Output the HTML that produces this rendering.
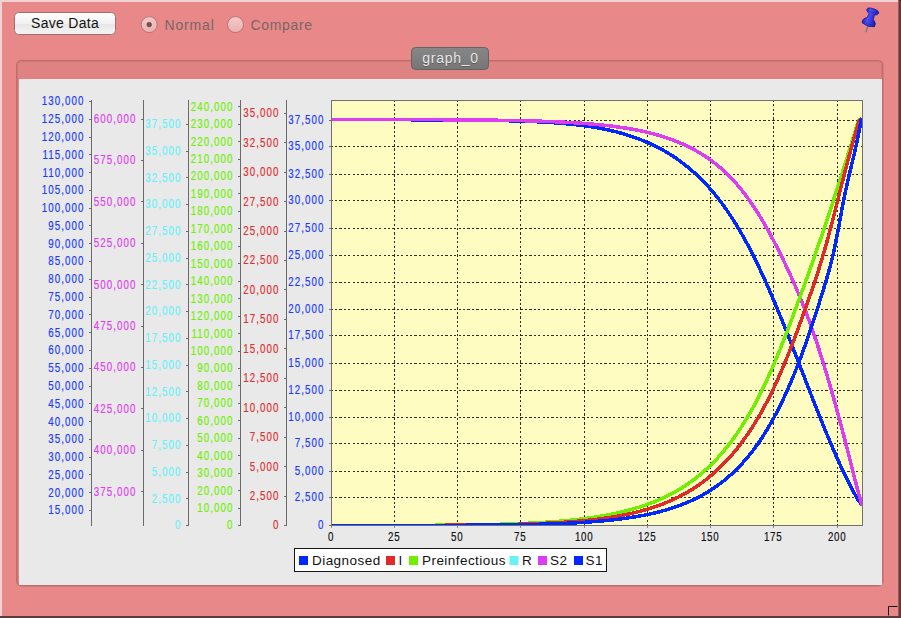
<!DOCTYPE html>
<html><head><meta charset="utf-8">
<style>
html,body{margin:0;padding:0;}
body{width:901px;height:618px;overflow:hidden;background:#e98888;position:relative;font-family:"Liberation Sans", sans-serif;}
svg{position:absolute;left:0;top:0;}
.al{font-family:"Liberation Sans", sans-serif;font-size:12.5px;letter-spacing:1.4px;text-anchor:end;stroke-width:0.2px;}
.xl{font-family:"Liberation Sans", sans-serif;font-size:12.5px;letter-spacing:1.0px;text-anchor:middle;stroke-width:0.2px;}
.lg{font-family:"Liberation Sans", sans-serif;font-size:13.5px;letter-spacing:0.45px;}
</style></head><body>
<svg width="901" height="618" viewBox="0 0 901 618">
<defs>
<clipPath id="clip"><rect x="331.5" y="100.5" width="531" height="425"/></clipPath>
<linearGradient id="btn" x1="0" y1="0" x2="0" y2="1">
<stop offset="0" stop-color="#ffffff"/><stop offset="0.5" stop-color="#f1f1f1"/><stop offset="0.55" stop-color="#e6e6e6"/><stop offset="1" stop-color="#f6f6f6"/>
</linearGradient>
<linearGradient id="radio" x1="0" y1="0" x2="0" y2="1">
<stop offset="0" stop-color="#f4caca"/><stop offset="1" stop-color="#eab0b0"/>
</linearGradient>
<linearGradient id="tab" x1="0" y1="0" x2="0" y2="1">
<stop offset="0" stop-color="#878787"/><stop offset="1" stop-color="#767676"/>
</linearGradient>
<linearGradient id="pin" x1="0" y1="0" x2="1" y2="0">
<stop offset="0" stop-color="#2020b8"/><stop offset="0.3" stop-color="#5050f4"/><stop offset="0.6" stop-color="#3838e0"/><stop offset="1" stop-color="#18189c"/>
</linearGradient>
</defs>
<!-- window frame -->
<rect x="0" y="0" width="901" height="2" fill="#f2d3d3"/>
<rect x="0" y="0" width="2" height="618" fill="#f2d3d3"/>
<rect x="898" y="0" width="1" height="618" fill="#9a5c5c"/>
<rect x="899" y="0" width="2" height="618" fill="#5a3c3c"/>
<rect x="900" y="0" width="1" height="1" fill="#700808"/>
<rect x="0" y="616" width="901" height="2" fill="#5a3c3c"/>
<path d="M888.5 615.5 V606.5 H897.5" fill="none" stroke="#111" stroke-width="1"/>
<!-- toolbar -->
<rect x="14.5" y="12.5" width="101" height="22" rx="4" fill="url(#btn)" stroke="#a86a6a" stroke-width="1"/>
<text x="31" y="28" font-size="14" fill="#111" letter-spacing="0.3">Save Data</text>
<circle cx="149.2" cy="24.6" r="8" fill="url(#radio)" stroke="#b86c6c" stroke-width="0.9"/>
<circle cx="149.2" cy="24.6" r="2.6" fill="#7a4c4e"/>
<text x="164.5" y="30" font-size="14" fill="#786666" letter-spacing="0.85">Normal</text>
<circle cx="235.5" cy="24.6" r="8" fill="url(#radio)" stroke="#b86c6c" stroke-width="0.9"/>
<text x="250.5" y="30" font-size="14" fill="#786666" letter-spacing="0.65">Compare</text>
<!-- pin -->
<g transform="translate(865.7,32.8) rotate(18)">
<line x1="0" y1="-0.5" x2="0" y2="-8" stroke="#7c7c7c" stroke-width="1.5"/>
<path d="M-6.5,-8.5 Q-8,-12.5 -3.2,-15 L-2.8,-19.5 Q-6.2,-20.5 -6.2,-22.5 Q-6.2,-25.3 0,-25.3 Q6.2,-25.3 6.2,-22.5 Q6.2,-20.5 2.8,-19.5 L3.2,-15 Q7.5,-12.5 6.5,-8.5 Q0,-5.5 -6.5,-8.5 Z" fill="url(#pin)" stroke="#16168c" stroke-width="0.7"/>
<path d="M-5.8,-22.3 Q0,-20 5.8,-22.3" fill="none" stroke="#2828b8" stroke-width="0.6"/>
<path d="M-6,-10 Q0,-7.5 6,-10" fill="none" stroke="#2626b0" stroke-width="0.6"/>
</g>
<!-- tabbed panel -->
<rect x="16.5" y="60.5" width="867" height="526" rx="5" fill="none" stroke="#d47b7b" stroke-width="1"/>
<rect x="16.5" y="60.5" width="866" height="525" rx="4.5" fill="#de8282" stroke="#bf6c6c" stroke-width="1"/>
<rect x="17.5" y="61.5" width="864" height="523" rx="3.5" fill="none" stroke="#d07777" stroke-width="1"/>
<rect x="19" y="79" width="863" height="506" fill="#e9e9e9"/>
<rect x="411.5" y="47.5" width="77" height="22" rx="4" fill="url(#tab)" stroke="#636363" stroke-width="1"/>
<text x="450.5" y="64" font-size="14" fill="#5a5a5a" text-anchor="middle" letter-spacing="0.7">graph_0</text>
<text x="450.5" y="63" font-size="14" fill="#e6e6e6" text-anchor="middle" letter-spacing="0.7">graph_0</text>
<line x1="91.5" y1="100" x2="91.5" y2="526" stroke="#6a6a6a" stroke-width="1"/>
<line x1="89.0" y1="510.5" x2="91.5" y2="510.5" stroke="#6a6a6a" stroke-width="1"/>
<text x="108.45" y="514.5" fill="#1a3cff" stroke="#1a3cff" class="al" transform="scale(0.78 1)">15,000</text>
<line x1="89.0" y1="492.5" x2="91.5" y2="492.5" stroke="#6a6a6a" stroke-width="1"/>
<text x="108.45" y="496.7" fill="#1a3cff" stroke="#1a3cff" class="al" transform="scale(0.78 1)">20,000</text>
<line x1="89.0" y1="474.5" x2="91.5" y2="474.5" stroke="#6a6a6a" stroke-width="1"/>
<text x="108.45" y="478.9" fill="#1a3cff" stroke="#1a3cff" class="al" transform="scale(0.78 1)">25,000</text>
<line x1="89.0" y1="457.5" x2="91.5" y2="457.5" stroke="#6a6a6a" stroke-width="1"/>
<text x="108.45" y="461.2" fill="#1a3cff" stroke="#1a3cff" class="al" transform="scale(0.78 1)">30,000</text>
<line x1="89.0" y1="439.5" x2="91.5" y2="439.5" stroke="#6a6a6a" stroke-width="1"/>
<text x="108.45" y="443.4" fill="#1a3cff" stroke="#1a3cff" class="al" transform="scale(0.78 1)">35,000</text>
<line x1="89.0" y1="421.5" x2="91.5" y2="421.5" stroke="#6a6a6a" stroke-width="1"/>
<text x="108.45" y="425.6" fill="#1a3cff" stroke="#1a3cff" class="al" transform="scale(0.78 1)">40,000</text>
<line x1="89.0" y1="403.5" x2="91.5" y2="403.5" stroke="#6a6a6a" stroke-width="1"/>
<text x="108.45" y="407.8" fill="#1a3cff" stroke="#1a3cff" class="al" transform="scale(0.78 1)">45,000</text>
<line x1="89.0" y1="386.5" x2="91.5" y2="386.5" stroke="#6a6a6a" stroke-width="1"/>
<text x="108.45" y="390.0" fill="#1a3cff" stroke="#1a3cff" class="al" transform="scale(0.78 1)">50,000</text>
<line x1="89.0" y1="368.5" x2="91.5" y2="368.5" stroke="#6a6a6a" stroke-width="1"/>
<text x="108.45" y="372.2" fill="#1a3cff" stroke="#1a3cff" class="al" transform="scale(0.78 1)">55,000</text>
<line x1="89.0" y1="350.5" x2="91.5" y2="350.5" stroke="#6a6a6a" stroke-width="1"/>
<text x="108.45" y="354.5" fill="#1a3cff" stroke="#1a3cff" class="al" transform="scale(0.78 1)">60,000</text>
<line x1="89.0" y1="332.5" x2="91.5" y2="332.5" stroke="#6a6a6a" stroke-width="1"/>
<text x="108.45" y="336.7" fill="#1a3cff" stroke="#1a3cff" class="al" transform="scale(0.78 1)">65,000</text>
<line x1="89.0" y1="314.5" x2="91.5" y2="314.5" stroke="#6a6a6a" stroke-width="1"/>
<text x="108.45" y="318.9" fill="#1a3cff" stroke="#1a3cff" class="al" transform="scale(0.78 1)">70,000</text>
<line x1="89.0" y1="297.5" x2="91.5" y2="297.5" stroke="#6a6a6a" stroke-width="1"/>
<text x="108.45" y="301.1" fill="#1a3cff" stroke="#1a3cff" class="al" transform="scale(0.78 1)">75,000</text>
<line x1="89.0" y1="279.5" x2="91.5" y2="279.5" stroke="#6a6a6a" stroke-width="1"/>
<text x="108.45" y="283.3" fill="#1a3cff" stroke="#1a3cff" class="al" transform="scale(0.78 1)">80,000</text>
<line x1="89.0" y1="261.5" x2="91.5" y2="261.5" stroke="#6a6a6a" stroke-width="1"/>
<text x="108.45" y="265.5" fill="#1a3cff" stroke="#1a3cff" class="al" transform="scale(0.78 1)">85,000</text>
<line x1="89.0" y1="243.5" x2="91.5" y2="243.5" stroke="#6a6a6a" stroke-width="1"/>
<text x="108.45" y="247.8" fill="#1a3cff" stroke="#1a3cff" class="al" transform="scale(0.78 1)">90,000</text>
<line x1="89.0" y1="225.5" x2="91.5" y2="225.5" stroke="#6a6a6a" stroke-width="1"/>
<text x="108.45" y="230.0" fill="#1a3cff" stroke="#1a3cff" class="al" transform="scale(0.78 1)">95,000</text>
<line x1="89.0" y1="208.5" x2="91.5" y2="208.5" stroke="#6a6a6a" stroke-width="1"/>
<text x="108.45" y="212.2" fill="#1a3cff" stroke="#1a3cff" class="al" transform="scale(0.78 1)">100,000</text>
<line x1="89.0" y1="190.5" x2="91.5" y2="190.5" stroke="#6a6a6a" stroke-width="1"/>
<text x="108.45" y="194.4" fill="#1a3cff" stroke="#1a3cff" class="al" transform="scale(0.78 1)">105,000</text>
<line x1="89.0" y1="172.5" x2="91.5" y2="172.5" stroke="#6a6a6a" stroke-width="1"/>
<text x="108.45" y="176.6" fill="#1a3cff" stroke="#1a3cff" class="al" transform="scale(0.78 1)">110,000</text>
<line x1="89.0" y1="154.5" x2="91.5" y2="154.5" stroke="#6a6a6a" stroke-width="1"/>
<text x="108.45" y="158.8" fill="#1a3cff" stroke="#1a3cff" class="al" transform="scale(0.78 1)">115,000</text>
<line x1="89.0" y1="137.5" x2="91.5" y2="137.5" stroke="#6a6a6a" stroke-width="1"/>
<text x="108.45" y="141.1" fill="#1a3cff" stroke="#1a3cff" class="al" transform="scale(0.78 1)">120,000</text>
<line x1="89.0" y1="119.5" x2="91.5" y2="119.5" stroke="#6a6a6a" stroke-width="1"/>
<text x="108.45" y="123.3" fill="#1a3cff" stroke="#1a3cff" class="al" transform="scale(0.78 1)">125,000</text>
<line x1="89.0" y1="101.5" x2="91.5" y2="101.5" stroke="#6a6a6a" stroke-width="1"/>
<text x="108.45" y="105.5" fill="#1a3cff" stroke="#1a3cff" class="al" transform="scale(0.78 1)">130,000</text>
<line x1="143.5" y1="100" x2="143.5" y2="526" stroke="#6a6a6a" stroke-width="1"/>
<line x1="141.0" y1="491.5" x2="143.5" y2="491.5" stroke="#6a6a6a" stroke-width="1"/>
<text x="175.12" y="495.8" fill="#e040f0" stroke="#e040f0" class="al" transform="scale(0.78 1)">375,000</text>
<line x1="141.0" y1="450.5" x2="143.5" y2="450.5" stroke="#6a6a6a" stroke-width="1"/>
<text x="175.12" y="454.4" fill="#e040f0" stroke="#e040f0" class="al" transform="scale(0.78 1)">400,000</text>
<line x1="141.0" y1="408.5" x2="143.5" y2="408.5" stroke="#6a6a6a" stroke-width="1"/>
<text x="175.12" y="413.0" fill="#e040f0" stroke="#e040f0" class="al" transform="scale(0.78 1)">425,000</text>
<line x1="141.0" y1="367.5" x2="143.5" y2="367.5" stroke="#6a6a6a" stroke-width="1"/>
<text x="175.12" y="371.5" fill="#e040f0" stroke="#e040f0" class="al" transform="scale(0.78 1)">450,000</text>
<line x1="141.0" y1="326.5" x2="143.5" y2="326.5" stroke="#6a6a6a" stroke-width="1"/>
<text x="175.12" y="330.1" fill="#e040f0" stroke="#e040f0" class="al" transform="scale(0.78 1)">475,000</text>
<line x1="141.0" y1="284.5" x2="143.5" y2="284.5" stroke="#6a6a6a" stroke-width="1"/>
<text x="175.12" y="288.7" fill="#e040f0" stroke="#e040f0" class="al" transform="scale(0.78 1)">500,000</text>
<line x1="141.0" y1="243.5" x2="143.5" y2="243.5" stroke="#6a6a6a" stroke-width="1"/>
<text x="175.12" y="247.3" fill="#e040f0" stroke="#e040f0" class="al" transform="scale(0.78 1)">525,000</text>
<line x1="141.0" y1="201.5" x2="143.5" y2="201.5" stroke="#6a6a6a" stroke-width="1"/>
<text x="175.12" y="205.8" fill="#e040f0" stroke="#e040f0" class="al" transform="scale(0.78 1)">550,000</text>
<line x1="141.0" y1="160.5" x2="143.5" y2="160.5" stroke="#6a6a6a" stroke-width="1"/>
<text x="175.12" y="164.4" fill="#e040f0" stroke="#e040f0" class="al" transform="scale(0.78 1)">575,000</text>
<line x1="141.0" y1="119.5" x2="143.5" y2="119.5" stroke="#6a6a6a" stroke-width="1"/>
<text x="175.12" y="123.0" fill="#e040f0" stroke="#e040f0" class="al" transform="scale(0.78 1)">600,000</text>
<line x1="188.5" y1="100" x2="188.5" y2="526" stroke="#6a6a6a" stroke-width="1"/>
<line x1="186.0" y1="525.5" x2="188.5" y2="525.5" stroke="#6a6a6a" stroke-width="1"/>
<text x="232.81" y="529.5" fill="#66f2f8" stroke="#66f2f8" class="al" transform="scale(0.78 1)">0</text>
<line x1="186.0" y1="498.5" x2="188.5" y2="498.5" stroke="#6a6a6a" stroke-width="1"/>
<text x="232.81" y="502.8" fill="#66f2f8" stroke="#66f2f8" class="al" transform="scale(0.78 1)">2,500</text>
<line x1="186.0" y1="472.5" x2="188.5" y2="472.5" stroke="#6a6a6a" stroke-width="1"/>
<text x="232.81" y="476.0" fill="#66f2f8" stroke="#66f2f8" class="al" transform="scale(0.78 1)">5,000</text>
<line x1="186.0" y1="445.5" x2="188.5" y2="445.5" stroke="#6a6a6a" stroke-width="1"/>
<text x="232.81" y="449.3" fill="#66f2f8" stroke="#66f2f8" class="al" transform="scale(0.78 1)">7,500</text>
<line x1="186.0" y1="418.5" x2="188.5" y2="418.5" stroke="#6a6a6a" stroke-width="1"/>
<text x="232.81" y="422.5" fill="#66f2f8" stroke="#66f2f8" class="al" transform="scale(0.78 1)">10,000</text>
<line x1="186.0" y1="391.5" x2="188.5" y2="391.5" stroke="#6a6a6a" stroke-width="1"/>
<text x="232.81" y="395.8" fill="#66f2f8" stroke="#66f2f8" class="al" transform="scale(0.78 1)">12,500</text>
<line x1="186.0" y1="365.5" x2="188.5" y2="365.5" stroke="#6a6a6a" stroke-width="1"/>
<text x="232.81" y="369.0" fill="#66f2f8" stroke="#66f2f8" class="al" transform="scale(0.78 1)">15,000</text>
<line x1="186.0" y1="338.5" x2="188.5" y2="338.5" stroke="#6a6a6a" stroke-width="1"/>
<text x="232.81" y="342.3" fill="#66f2f8" stroke="#66f2f8" class="al" transform="scale(0.78 1)">17,500</text>
<line x1="186.0" y1="311.5" x2="188.5" y2="311.5" stroke="#6a6a6a" stroke-width="1"/>
<text x="232.81" y="315.5" fill="#66f2f8" stroke="#66f2f8" class="al" transform="scale(0.78 1)">20,000</text>
<line x1="186.0" y1="284.5" x2="188.5" y2="284.5" stroke="#6a6a6a" stroke-width="1"/>
<text x="232.81" y="288.8" fill="#66f2f8" stroke="#66f2f8" class="al" transform="scale(0.78 1)">22,500</text>
<line x1="186.0" y1="258.5" x2="188.5" y2="258.5" stroke="#6a6a6a" stroke-width="1"/>
<text x="232.81" y="262.0" fill="#66f2f8" stroke="#66f2f8" class="al" transform="scale(0.78 1)">25,000</text>
<line x1="186.0" y1="231.5" x2="188.5" y2="231.5" stroke="#6a6a6a" stroke-width="1"/>
<text x="232.81" y="235.3" fill="#66f2f8" stroke="#66f2f8" class="al" transform="scale(0.78 1)">27,500</text>
<line x1="186.0" y1="204.5" x2="188.5" y2="204.5" stroke="#6a6a6a" stroke-width="1"/>
<text x="232.81" y="208.5" fill="#66f2f8" stroke="#66f2f8" class="al" transform="scale(0.78 1)">30,000</text>
<line x1="186.0" y1="177.5" x2="188.5" y2="177.5" stroke="#6a6a6a" stroke-width="1"/>
<text x="232.81" y="181.8" fill="#66f2f8" stroke="#66f2f8" class="al" transform="scale(0.78 1)">32,500</text>
<line x1="186.0" y1="151.5" x2="188.5" y2="151.5" stroke="#6a6a6a" stroke-width="1"/>
<text x="232.81" y="155.0" fill="#66f2f8" stroke="#66f2f8" class="al" transform="scale(0.78 1)">35,000</text>
<line x1="186.0" y1="124.5" x2="188.5" y2="124.5" stroke="#6a6a6a" stroke-width="1"/>
<text x="232.81" y="128.3" fill="#66f2f8" stroke="#66f2f8" class="al" transform="scale(0.78 1)">37,500</text>
<line x1="240.5" y1="100" x2="240.5" y2="526" stroke="#6a6a6a" stroke-width="1"/>
<line x1="238.0" y1="525.5" x2="240.5" y2="525.5" stroke="#6a6a6a" stroke-width="1"/>
<text x="299.48" y="529.5" fill="#6ef000" stroke="#6ef000" class="al" transform="scale(0.78 1)">0</text>
<line x1="238.0" y1="508.5" x2="240.5" y2="508.5" stroke="#6a6a6a" stroke-width="1"/>
<text x="299.48" y="512.0" fill="#6ef000" stroke="#6ef000" class="al" transform="scale(0.78 1)">10,000</text>
<line x1="238.0" y1="490.5" x2="240.5" y2="490.5" stroke="#6a6a6a" stroke-width="1"/>
<text x="299.48" y="494.6" fill="#6ef000" stroke="#6ef000" class="al" transform="scale(0.78 1)">20,000</text>
<line x1="238.0" y1="473.5" x2="240.5" y2="473.5" stroke="#6a6a6a" stroke-width="1"/>
<text x="299.48" y="477.1" fill="#6ef000" stroke="#6ef000" class="al" transform="scale(0.78 1)">30,000</text>
<line x1="238.0" y1="455.5" x2="240.5" y2="455.5" stroke="#6a6a6a" stroke-width="1"/>
<text x="299.48" y="459.7" fill="#6ef000" stroke="#6ef000" class="al" transform="scale(0.78 1)">40,000</text>
<line x1="238.0" y1="438.5" x2="240.5" y2="438.5" stroke="#6a6a6a" stroke-width="1"/>
<text x="299.48" y="442.2" fill="#6ef000" stroke="#6ef000" class="al" transform="scale(0.78 1)">50,000</text>
<line x1="238.0" y1="420.5" x2="240.5" y2="420.5" stroke="#6a6a6a" stroke-width="1"/>
<text x="299.48" y="424.8" fill="#6ef000" stroke="#6ef000" class="al" transform="scale(0.78 1)">60,000</text>
<line x1="238.0" y1="403.5" x2="240.5" y2="403.5" stroke="#6a6a6a" stroke-width="1"/>
<text x="299.48" y="407.3" fill="#6ef000" stroke="#6ef000" class="al" transform="scale(0.78 1)">70,000</text>
<line x1="238.0" y1="385.5" x2="240.5" y2="385.5" stroke="#6a6a6a" stroke-width="1"/>
<text x="299.48" y="389.9" fill="#6ef000" stroke="#6ef000" class="al" transform="scale(0.78 1)">80,000</text>
<line x1="238.0" y1="368.5" x2="240.5" y2="368.5" stroke="#6a6a6a" stroke-width="1"/>
<text x="299.48" y="372.4" fill="#6ef000" stroke="#6ef000" class="al" transform="scale(0.78 1)">90,000</text>
<line x1="238.0" y1="351.5" x2="240.5" y2="351.5" stroke="#6a6a6a" stroke-width="1"/>
<text x="299.48" y="355.0" fill="#6ef000" stroke="#6ef000" class="al" transform="scale(0.78 1)">100,000</text>
<line x1="238.0" y1="333.5" x2="240.5" y2="333.5" stroke="#6a6a6a" stroke-width="1"/>
<text x="299.48" y="337.6" fill="#6ef000" stroke="#6ef000" class="al" transform="scale(0.78 1)">110,000</text>
<line x1="238.0" y1="316.5" x2="240.5" y2="316.5" stroke="#6a6a6a" stroke-width="1"/>
<text x="299.48" y="320.1" fill="#6ef000" stroke="#6ef000" class="al" transform="scale(0.78 1)">120,000</text>
<line x1="238.0" y1="298.5" x2="240.5" y2="298.5" stroke="#6a6a6a" stroke-width="1"/>
<text x="299.48" y="302.6" fill="#6ef000" stroke="#6ef000" class="al" transform="scale(0.78 1)">130,000</text>
<line x1="238.0" y1="281.5" x2="240.5" y2="281.5" stroke="#6a6a6a" stroke-width="1"/>
<text x="299.48" y="285.2" fill="#6ef000" stroke="#6ef000" class="al" transform="scale(0.78 1)">140,000</text>
<line x1="238.0" y1="263.5" x2="240.5" y2="263.5" stroke="#6a6a6a" stroke-width="1"/>
<text x="299.48" y="267.8" fill="#6ef000" stroke="#6ef000" class="al" transform="scale(0.78 1)">150,000</text>
<line x1="238.0" y1="246.5" x2="240.5" y2="246.5" stroke="#6a6a6a" stroke-width="1"/>
<text x="299.48" y="250.3" fill="#6ef000" stroke="#6ef000" class="al" transform="scale(0.78 1)">160,000</text>
<line x1="238.0" y1="228.5" x2="240.5" y2="228.5" stroke="#6a6a6a" stroke-width="1"/>
<text x="299.48" y="232.9" fill="#6ef000" stroke="#6ef000" class="al" transform="scale(0.78 1)">170,000</text>
<line x1="238.0" y1="211.5" x2="240.5" y2="211.5" stroke="#6a6a6a" stroke-width="1"/>
<text x="299.48" y="215.4" fill="#6ef000" stroke="#6ef000" class="al" transform="scale(0.78 1)">180,000</text>
<line x1="238.0" y1="193.5" x2="240.5" y2="193.5" stroke="#6a6a6a" stroke-width="1"/>
<text x="299.48" y="197.9" fill="#6ef000" stroke="#6ef000" class="al" transform="scale(0.78 1)">190,000</text>
<line x1="238.0" y1="176.5" x2="240.5" y2="176.5" stroke="#6a6a6a" stroke-width="1"/>
<text x="299.48" y="180.5" fill="#6ef000" stroke="#6ef000" class="al" transform="scale(0.78 1)">200,000</text>
<line x1="238.0" y1="159.5" x2="240.5" y2="159.5" stroke="#6a6a6a" stroke-width="1"/>
<text x="299.48" y="163.1" fill="#6ef000" stroke="#6ef000" class="al" transform="scale(0.78 1)">210,000</text>
<line x1="238.0" y1="141.5" x2="240.5" y2="141.5" stroke="#6a6a6a" stroke-width="1"/>
<text x="299.48" y="145.6" fill="#6ef000" stroke="#6ef000" class="al" transform="scale(0.78 1)">220,000</text>
<line x1="238.0" y1="124.5" x2="240.5" y2="124.5" stroke="#6a6a6a" stroke-width="1"/>
<text x="299.48" y="128.2" fill="#6ef000" stroke="#6ef000" class="al" transform="scale(0.78 1)">230,000</text>
<line x1="238.0" y1="106.5" x2="240.5" y2="106.5" stroke="#6a6a6a" stroke-width="1"/>
<text x="299.48" y="110.7" fill="#6ef000" stroke="#6ef000" class="al" transform="scale(0.78 1)">240,000</text>
<line x1="286.5" y1="100" x2="286.5" y2="526" stroke="#6a6a6a" stroke-width="1"/>
<line x1="284.0" y1="525.5" x2="286.5" y2="525.5" stroke="#6a6a6a" stroke-width="1"/>
<text x="358.45" y="529.5" fill="#e03030" stroke="#e03030" class="al" transform="scale(0.78 1)">0</text>
<line x1="284.0" y1="496.5" x2="286.5" y2="496.5" stroke="#6a6a6a" stroke-width="1"/>
<text x="358.45" y="500.1" fill="#e03030" stroke="#e03030" class="al" transform="scale(0.78 1)">2,500</text>
<line x1="284.0" y1="466.5" x2="286.5" y2="466.5" stroke="#6a6a6a" stroke-width="1"/>
<text x="358.45" y="470.6" fill="#e03030" stroke="#e03030" class="al" transform="scale(0.78 1)">5,000</text>
<line x1="284.0" y1="437.5" x2="286.5" y2="437.5" stroke="#6a6a6a" stroke-width="1"/>
<text x="358.45" y="441.2" fill="#e03030" stroke="#e03030" class="al" transform="scale(0.78 1)">7,500</text>
<line x1="284.0" y1="407.5" x2="286.5" y2="407.5" stroke="#6a6a6a" stroke-width="1"/>
<text x="358.45" y="411.7" fill="#e03030" stroke="#e03030" class="al" transform="scale(0.78 1)">10,000</text>
<line x1="284.0" y1="378.5" x2="286.5" y2="378.5" stroke="#6a6a6a" stroke-width="1"/>
<text x="358.45" y="382.3" fill="#e03030" stroke="#e03030" class="al" transform="scale(0.78 1)">12,500</text>
<line x1="284.0" y1="348.5" x2="286.5" y2="348.5" stroke="#6a6a6a" stroke-width="1"/>
<text x="358.45" y="352.8" fill="#e03030" stroke="#e03030" class="al" transform="scale(0.78 1)">15,000</text>
<line x1="284.0" y1="319.5" x2="286.5" y2="319.5" stroke="#6a6a6a" stroke-width="1"/>
<text x="358.45" y="323.4" fill="#e03030" stroke="#e03030" class="al" transform="scale(0.78 1)">17,500</text>
<line x1="284.0" y1="289.5" x2="286.5" y2="289.5" stroke="#6a6a6a" stroke-width="1"/>
<text x="358.45" y="294.0" fill="#e03030" stroke="#e03030" class="al" transform="scale(0.78 1)">20,000</text>
<line x1="284.0" y1="260.5" x2="286.5" y2="260.5" stroke="#6a6a6a" stroke-width="1"/>
<text x="358.45" y="264.5" fill="#e03030" stroke="#e03030" class="al" transform="scale(0.78 1)">22,500</text>
<line x1="284.0" y1="231.5" x2="286.5" y2="231.5" stroke="#6a6a6a" stroke-width="1"/>
<text x="358.45" y="235.1" fill="#e03030" stroke="#e03030" class="al" transform="scale(0.78 1)">25,000</text>
<line x1="284.0" y1="201.5" x2="286.5" y2="201.5" stroke="#6a6a6a" stroke-width="1"/>
<text x="358.45" y="205.6" fill="#e03030" stroke="#e03030" class="al" transform="scale(0.78 1)">27,500</text>
<line x1="284.0" y1="172.5" x2="286.5" y2="172.5" stroke="#6a6a6a" stroke-width="1"/>
<text x="358.45" y="176.2" fill="#e03030" stroke="#e03030" class="al" transform="scale(0.78 1)">30,000</text>
<line x1="284.0" y1="142.5" x2="286.5" y2="142.5" stroke="#6a6a6a" stroke-width="1"/>
<text x="358.45" y="146.7" fill="#e03030" stroke="#e03030" class="al" transform="scale(0.78 1)">32,500</text>
<line x1="284.0" y1="113.5" x2="286.5" y2="113.5" stroke="#6a6a6a" stroke-width="1"/>
<text x="358.45" y="117.3" fill="#e03030" stroke="#e03030" class="al" transform="scale(0.78 1)">35,000</text>
<line x1="329.0" y1="525.5" x2="331.5" y2="525.5" stroke="#6a6a6a" stroke-width="1"/>
<text x="416.14" y="529.0" fill="#1a3cff" stroke="#1a3cff" class="al" transform="scale(0.78 1)">0</text>
<line x1="329.0" y1="497.5" x2="331.5" y2="497.5" stroke="#6a6a6a" stroke-width="1"/>
<text x="416.14" y="501.0" fill="#1a3cff" stroke="#1a3cff" class="al" transform="scale(0.78 1)">2,500</text>
<line x1="329.0" y1="471.5" x2="331.5" y2="471.5" stroke="#6a6a6a" stroke-width="1"/>
<text x="416.14" y="475.0" fill="#1a3cff" stroke="#1a3cff" class="al" transform="scale(0.78 1)">5,000</text>
<line x1="329.0" y1="443.5" x2="331.5" y2="443.5" stroke="#6a6a6a" stroke-width="1"/>
<text x="416.14" y="447.0" fill="#1a3cff" stroke="#1a3cff" class="al" transform="scale(0.78 1)">7,500</text>
<line x1="329.0" y1="417.5" x2="331.5" y2="417.5" stroke="#6a6a6a" stroke-width="1"/>
<text x="416.14" y="421.0" fill="#1a3cff" stroke="#1a3cff" class="al" transform="scale(0.78 1)">10,000</text>
<line x1="329.0" y1="390.5" x2="331.5" y2="390.5" stroke="#6a6a6a" stroke-width="1"/>
<text x="416.14" y="394.0" fill="#1a3cff" stroke="#1a3cff" class="al" transform="scale(0.78 1)">12,500</text>
<line x1="329.0" y1="363.5" x2="331.5" y2="363.5" stroke="#6a6a6a" stroke-width="1"/>
<text x="416.14" y="367.0" fill="#1a3cff" stroke="#1a3cff" class="al" transform="scale(0.78 1)">15,000</text>
<line x1="329.0" y1="335.5" x2="331.5" y2="335.5" stroke="#6a6a6a" stroke-width="1"/>
<text x="416.14" y="339.0" fill="#1a3cff" stroke="#1a3cff" class="al" transform="scale(0.78 1)">17,500</text>
<line x1="329.0" y1="309.5" x2="331.5" y2="309.5" stroke="#6a6a6a" stroke-width="1"/>
<text x="416.14" y="313.0" fill="#1a3cff" stroke="#1a3cff" class="al" transform="scale(0.78 1)">20,000</text>
<line x1="329.0" y1="282.5" x2="331.5" y2="282.5" stroke="#6a6a6a" stroke-width="1"/>
<text x="416.14" y="286.0" fill="#1a3cff" stroke="#1a3cff" class="al" transform="scale(0.78 1)">22,500</text>
<line x1="329.0" y1="255.5" x2="331.5" y2="255.5" stroke="#6a6a6a" stroke-width="1"/>
<text x="416.14" y="259.0" fill="#1a3cff" stroke="#1a3cff" class="al" transform="scale(0.78 1)">25,000</text>
<line x1="329.0" y1="228.5" x2="331.5" y2="228.5" stroke="#6a6a6a" stroke-width="1"/>
<text x="416.14" y="232.0" fill="#1a3cff" stroke="#1a3cff" class="al" transform="scale(0.78 1)">27,500</text>
<line x1="329.0" y1="200.5" x2="331.5" y2="200.5" stroke="#6a6a6a" stroke-width="1"/>
<text x="416.14" y="204.0" fill="#1a3cff" stroke="#1a3cff" class="al" transform="scale(0.78 1)">30,000</text>
<line x1="329.0" y1="174.5" x2="331.5" y2="174.5" stroke="#6a6a6a" stroke-width="1"/>
<text x="416.14" y="178.0" fill="#1a3cff" stroke="#1a3cff" class="al" transform="scale(0.78 1)">32,500</text>
<line x1="329.0" y1="146.5" x2="331.5" y2="146.5" stroke="#6a6a6a" stroke-width="1"/>
<text x="416.14" y="150.0" fill="#1a3cff" stroke="#1a3cff" class="al" transform="scale(0.78 1)">35,000</text>
<line x1="329.0" y1="120.5" x2="331.5" y2="120.5" stroke="#6a6a6a" stroke-width="1"/>
<text x="416.14" y="124.0" fill="#1a3cff" stroke="#1a3cff" class="al" transform="scale(0.78 1)">37,500</text>
<rect x="331" y="100" width="532" height="426" fill="#fffcc2"/>
<line x1="394.5" y1="101" x2="394.5" y2="525" stroke="#2e2e26" stroke-width="1" stroke-dasharray="2.209 2.209" stroke-dashoffset="1.19" shape-rendering="crispEdges"/>
<line x1="457.5" y1="101" x2="457.5" y2="525" stroke="#2e2e26" stroke-width="1" stroke-dasharray="2.209 2.209" stroke-dashoffset="1.19" shape-rendering="crispEdges"/>
<line x1="520.5" y1="101" x2="520.5" y2="525" stroke="#2e2e26" stroke-width="1" stroke-dasharray="2.209 2.209" stroke-dashoffset="1.19" shape-rendering="crispEdges"/>
<line x1="584.5" y1="101" x2="584.5" y2="525" stroke="#2e2e26" stroke-width="1" stroke-dasharray="2.209 2.209" stroke-dashoffset="1.19" shape-rendering="crispEdges"/>
<line x1="647.5" y1="101" x2="647.5" y2="525" stroke="#2e2e26" stroke-width="1" stroke-dasharray="2.209 2.209" stroke-dashoffset="1.19" shape-rendering="crispEdges"/>
<line x1="710.5" y1="101" x2="710.5" y2="525" stroke="#2e2e26" stroke-width="1" stroke-dasharray="2.209 2.209" stroke-dashoffset="1.19" shape-rendering="crispEdges"/>
<line x1="773.5" y1="101" x2="773.5" y2="525" stroke="#2e2e26" stroke-width="1" stroke-dasharray="2.209 2.209" stroke-dashoffset="1.19" shape-rendering="crispEdges"/>
<line x1="837.5" y1="101" x2="837.5" y2="525" stroke="#2e2e26" stroke-width="1" stroke-dasharray="2.209 2.209" stroke-dashoffset="1.19" shape-rendering="crispEdges"/>
<line x1="332" y1="497.5" x2="862" y2="497.5" stroke="#2e2e26" stroke-width="1" stroke-dasharray="2.209 2.209" stroke-dashoffset="1.49" shape-rendering="crispEdges"/>
<line x1="332" y1="471.5" x2="862" y2="471.5" stroke="#2e2e26" stroke-width="1" stroke-dasharray="2.209 2.209" stroke-dashoffset="1.49" shape-rendering="crispEdges"/>
<line x1="332" y1="443.5" x2="862" y2="443.5" stroke="#2e2e26" stroke-width="1" stroke-dasharray="2.209 2.209" stroke-dashoffset="1.49" shape-rendering="crispEdges"/>
<line x1="332" y1="417.5" x2="862" y2="417.5" stroke="#2e2e26" stroke-width="1" stroke-dasharray="2.209 2.209" stroke-dashoffset="1.49" shape-rendering="crispEdges"/>
<line x1="332" y1="390.5" x2="862" y2="390.5" stroke="#2e2e26" stroke-width="1" stroke-dasharray="2.209 2.209" stroke-dashoffset="1.49" shape-rendering="crispEdges"/>
<line x1="332" y1="363.5" x2="862" y2="363.5" stroke="#2e2e26" stroke-width="1" stroke-dasharray="2.209 2.209" stroke-dashoffset="1.49" shape-rendering="crispEdges"/>
<line x1="332" y1="335.5" x2="862" y2="335.5" stroke="#2e2e26" stroke-width="1" stroke-dasharray="2.209 2.209" stroke-dashoffset="1.49" shape-rendering="crispEdges"/>
<line x1="332" y1="309.5" x2="862" y2="309.5" stroke="#2e2e26" stroke-width="1" stroke-dasharray="2.209 2.209" stroke-dashoffset="1.49" shape-rendering="crispEdges"/>
<line x1="332" y1="282.5" x2="862" y2="282.5" stroke="#2e2e26" stroke-width="1" stroke-dasharray="2.209 2.209" stroke-dashoffset="1.49" shape-rendering="crispEdges"/>
<line x1="332" y1="255.5" x2="862" y2="255.5" stroke="#2e2e26" stroke-width="1" stroke-dasharray="2.209 2.209" stroke-dashoffset="1.49" shape-rendering="crispEdges"/>
<line x1="332" y1="228.5" x2="862" y2="228.5" stroke="#2e2e26" stroke-width="1" stroke-dasharray="2.209 2.209" stroke-dashoffset="1.49" shape-rendering="crispEdges"/>
<line x1="332" y1="200.5" x2="862" y2="200.5" stroke="#2e2e26" stroke-width="1" stroke-dasharray="2.209 2.209" stroke-dashoffset="1.49" shape-rendering="crispEdges"/>
<line x1="332" y1="174.5" x2="862" y2="174.5" stroke="#2e2e26" stroke-width="1" stroke-dasharray="2.209 2.209" stroke-dashoffset="1.49" shape-rendering="crispEdges"/>
<line x1="332" y1="146.5" x2="862" y2="146.5" stroke="#2e2e26" stroke-width="1" stroke-dasharray="2.209 2.209" stroke-dashoffset="1.49" shape-rendering="crispEdges"/>
<line x1="332" y1="120.5" x2="862" y2="120.5" stroke="#2e2e26" stroke-width="1" stroke-dasharray="2.209 2.209" stroke-dashoffset="1.49" shape-rendering="crispEdges"/>
<line x1="331.5" y1="525.5" x2="331.5" y2="528" stroke="#8c8c8c" stroke-width="1"/>
<text x="424.60" y="541" fill="#111" stroke="#111" class="xl" transform="scale(0.78 1)">0</text>
<line x1="394.5" y1="525.5" x2="394.5" y2="528" stroke="#8c8c8c" stroke-width="1"/>
<text x="505.37" y="541" fill="#111" stroke="#111" class="xl" transform="scale(0.78 1)">25</text>
<line x1="457.5" y1="525.5" x2="457.5" y2="528" stroke="#8c8c8c" stroke-width="1"/>
<text x="586.14" y="541" fill="#111" stroke="#111" class="xl" transform="scale(0.78 1)">50</text>
<line x1="520.5" y1="525.5" x2="520.5" y2="528" stroke="#8c8c8c" stroke-width="1"/>
<text x="666.91" y="541" fill="#111" stroke="#111" class="xl" transform="scale(0.78 1)">75</text>
<line x1="584.5" y1="525.5" x2="584.5" y2="528" stroke="#8c8c8c" stroke-width="1"/>
<text x="748.96" y="541" fill="#111" stroke="#111" class="xl" transform="scale(0.78 1)">100</text>
<line x1="647.5" y1="525.5" x2="647.5" y2="528" stroke="#8c8c8c" stroke-width="1"/>
<text x="829.73" y="541" fill="#111" stroke="#111" class="xl" transform="scale(0.78 1)">125</text>
<line x1="710.5" y1="525.5" x2="710.5" y2="528" stroke="#8c8c8c" stroke-width="1"/>
<text x="910.50" y="541" fill="#111" stroke="#111" class="xl" transform="scale(0.78 1)">150</text>
<line x1="773.5" y1="525.5" x2="773.5" y2="528" stroke="#8c8c8c" stroke-width="1"/>
<text x="991.27" y="541" fill="#111" stroke="#111" class="xl" transform="scale(0.78 1)">175</text>
<line x1="837.5" y1="525.5" x2="837.5" y2="528" stroke="#8c8c8c" stroke-width="1"/>
<text x="1073.32" y="541" fill="#111" stroke="#111" class="xl" transform="scale(0.78 1)">200</text>
<g clip-path="url(#clip)" fill="none" stroke-width="3.5" stroke-linejoin="round" shape-rendering="crispEdges">
<polyline points="331.50,119.66 332.51,119.66 333.52,119.66 334.53,119.66 335.55,119.66 336.56,119.66 337.57,119.66 338.58,119.66 339.59,119.66 340.60,119.66 341.61,119.66 342.63,119.66 343.64,119.66 344.65,119.66 345.66,119.66 346.67,119.66 347.68,119.66 348.69,119.66 349.71,119.66 350.72,119.66 351.73,119.66 352.74,119.66 353.75,119.66 354.76,119.66 355.77,119.66 356.79,119.67 357.80,119.67 358.81,119.67 359.82,119.67 360.83,119.67 361.84,119.67 362.85,119.67 363.87,119.67 364.88,119.67 365.89,119.67 366.90,119.67 367.91,119.67 368.92,119.67 369.93,119.67 370.95,119.68 371.96,119.68 372.97,119.68 373.98,119.68 374.99,119.68 376.00,119.68 377.01,119.68 378.03,119.68 379.04,119.68 380.05,119.69 381.06,119.69 382.07,119.69 383.08,119.69 384.09,119.69 385.11,119.69 386.12,119.69 387.13,119.70 388.14,119.70 389.15,119.70 390.16,119.70 391.17,119.70 392.19,119.70 393.20,119.71 394.21,119.71 395.22,119.71 396.23,119.71 397.24,119.71 398.25,119.72 399.27,119.72 400.28,119.72 401.29,119.72 402.30,119.73 403.31,119.73 404.32,119.73 405.33,119.73 406.35,119.74 407.36,119.74 408.37,119.74 409.38,119.74 410.39,119.75 411.40,119.75 412.41,119.75 413.43,119.75 414.44,119.76 415.45,119.76 416.46,119.76 417.47,119.77 418.48,119.77 419.49,119.77 420.51,119.78 421.52,119.78 422.53,119.79 423.54,119.79 424.55,119.79 425.56,119.80 426.57,119.80 427.59,119.80 428.60,119.81 429.61,119.81 430.62,119.82 431.63,119.82 432.64,119.83 433.65,119.83 434.67,119.84 435.68,119.84 436.69,119.85 437.70,119.85 438.71,119.86 439.72,119.86 440.73,119.87 441.75,119.87 442.76,119.88 443.77,119.89 444.78,119.89 445.79,119.90 446.80,119.90 447.81,119.91 448.83,119.92 449.84,119.92 450.85,119.93 451.86,119.94 452.87,119.94 453.88,119.95 454.89,119.96 455.91,119.97 456.92,119.98 457.93,119.98 458.94,119.99 459.95,120.00 460.96,120.01 461.97,120.02 462.99,120.03 464.00,120.04 465.01,120.05 466.02,120.06 467.03,120.07 468.04,120.08 469.05,120.09 470.07,120.10 471.08,120.11 472.09,120.12 473.10,120.13 474.11,120.14 475.12,120.15 476.13,120.17 477.15,120.18 478.16,120.19 479.17,120.20 480.18,120.22 481.19,120.23 482.20,120.24 483.21,120.26 484.23,120.27 485.24,120.29 486.25,120.30 487.26,120.32 488.27,120.34 489.28,120.35 490.29,120.37 491.31,120.39 492.32,120.40 493.33,120.42 494.34,120.44 495.35,120.46 496.36,120.48 497.37,120.50 498.39,120.52 499.40,120.54 500.41,120.56 501.42,120.58 502.43,120.60 503.44,120.63 504.45,120.65 505.47,120.67 506.48,120.70 507.49,120.72 508.50,120.75 509.51,120.77 510.52,120.80 511.53,120.83 512.55,120.85 513.56,120.88 514.57,120.91 515.58,120.94 516.59,120.97 517.60,121.00 518.61,121.03 519.63,121.07 520.64,121.10 521.65,121.13 522.66,121.17 523.67,121.20 524.68,121.24 525.69,121.28 526.71,121.32 527.72,121.36 528.73,121.40 529.74,121.44 530.75,121.48 531.76,121.52 532.77,121.57 533.79,121.61 534.80,121.66 535.81,121.70 536.82,121.75 537.83,121.80 538.84,121.85 539.85,121.90 540.87,121.96 541.88,122.01 542.89,122.07 543.90,122.12 544.91,122.18 545.92,122.24 546.93,122.30 547.95,122.36 548.96,122.42 549.97,122.49 550.98,122.55 551.99,122.62 553.00,122.69 554.01,122.76 555.03,122.83 556.04,122.91 557.05,122.98 558.06,123.06 559.07,123.14 560.08,123.22 561.09,123.30 562.11,123.39 563.12,123.47 564.13,123.56 565.14,123.65 566.15,123.74 567.16,123.84 568.17,123.94 569.19,124.03 570.20,124.13 571.21,124.24 572.22,124.34 573.23,124.45 574.24,124.56 575.25,124.67 576.27,124.79 577.28,124.90 578.29,125.02 579.30,125.15 580.31,125.27 581.32,125.40 582.33,125.53 583.35,125.66 584.36,125.80 585.37,125.94 586.38,126.08 587.39,126.22 588.40,126.37 589.41,126.52 590.43,126.68 591.44,126.83 592.45,127.00 593.46,127.16 594.47,127.33 595.48,127.50 596.49,127.67 597.51,127.85 598.52,128.03 599.53,128.22 600.54,128.41 601.55,128.60 602.56,128.80 603.57,129.00 604.59,129.20 605.60,129.41 606.61,129.62 607.62,129.84 608.63,130.06 609.64,130.29 610.65,130.52 611.67,130.75 612.68,130.99 613.69,131.24 614.70,131.48 615.71,131.74 616.72,132.00 617.73,132.26 618.75,132.53 619.76,132.80 620.77,133.08 621.78,133.36 622.79,133.65 623.80,133.94 624.81,134.24 625.83,134.55 626.84,134.86 627.85,135.17 628.86,135.49 629.87,135.82 630.88,136.15 631.89,136.49 632.84,136.81 633.79,137.14 634.74,137.47 635.69,137.81 636.64,138.15 637.58,138.50 638.53,138.86 639.48,139.22 640.43,139.58 641.38,139.96 642.32,140.33 643.27,140.72 644.22,141.11 645.17,141.50 646.12,141.91 647.07,142.31 648.01,142.73 648.96,143.15 649.91,143.58 650.86,144.01 651.81,144.45 652.75,144.90 653.70,145.36 654.65,145.82 655.60,146.29 656.55,146.76 657.50,147.25 658.44,147.74 659.39,148.24 660.28,148.71 661.16,149.19 662.05,149.67 662.93,150.16 663.82,150.66 664.70,151.17 665.59,151.68 666.47,152.20 667.36,152.73 668.24,153.26 669.13,153.81 670.01,154.36 670.90,154.91 671.78,155.48 672.67,156.05 673.55,156.63 674.44,157.22 675.32,157.82 676.21,158.42 677.09,159.03 677.91,159.61 678.74,160.19 679.56,160.78 680.38,161.38 681.20,161.99 682.02,162.60 682.85,163.22 683.67,163.85 684.49,164.49 685.31,165.13 686.13,165.78 686.95,166.45 687.78,167.11 688.60,167.79 689.42,168.48 690.24,169.17 691.06,169.87 691.82,170.53 692.58,171.19 693.34,171.86 694.10,172.54 694.86,173.23 695.61,173.92 696.37,174.62 697.13,175.33 697.89,176.05 698.65,176.78 699.41,177.51 700.17,178.25 700.92,179.00 701.68,179.76 702.44,180.53 703.20,181.30 703.96,182.09 704.65,182.81 705.35,183.55 706.04,184.29 706.74,185.04 707.44,185.79 708.13,186.56 708.83,187.33 709.52,188.11 710.22,188.89 710.91,189.69 711.61,190.49 712.30,191.30 713.00,192.12 713.69,192.95 714.39,193.79 715.08,194.63 715.72,195.41 716.35,196.19 716.98,196.98 717.61,197.77 718.25,198.58 718.88,199.39 719.51,200.21 720.14,201.03 720.77,201.87 721.41,202.71 722.04,203.56 722.67,204.41 723.30,205.27 723.93,206.15 724.57,207.03 725.20,207.91 725.83,208.81 726.46,209.71 727.10,210.62 727.66,211.45 728.23,212.28 728.80,213.12 729.37,213.97 729.94,214.82 730.51,215.68 731.08,216.55 731.65,217.42 732.22,218.30 732.78,219.19 733.35,220.08 733.92,220.98 734.49,221.88 735.06,222.80 735.63,223.72 736.20,224.64 736.77,225.57 737.34,226.51 737.90,227.46 738.47,228.41 739.04,229.37 739.61,230.34 740.12,231.20 740.62,232.08 741.13,232.95 741.63,233.83 742.14,234.72 742.65,235.61 743.15,236.51 743.66,237.41 744.16,238.32 744.67,239.23 745.17,240.15 745.68,241.07 746.19,242.00 746.69,242.94 747.20,243.88 747.70,244.82 748.21,245.78 748.71,246.73 749.22,247.69 749.73,248.66 750.23,249.63 750.74,250.61 751.24,251.59 751.75,252.58 752.25,253.57 752.76,254.57 753.27,255.58 753.77,256.59 754.28,257.60 754.78,258.62 755.29,259.65 755.73,260.55 756.17,261.45 756.62,262.36 757.06,263.27 757.50,264.19 757.94,265.11 758.39,266.03 758.83,266.96 759.27,267.89 759.71,268.83 760.16,269.77 760.60,270.71 761.04,271.66 761.48,272.61 761.93,273.57 762.37,274.53 762.81,275.49 763.25,276.45 763.70,277.42 764.14,278.40 764.58,279.37 765.02,280.35 765.47,281.34 765.91,282.33 766.35,283.32 766.79,284.31 767.24,285.31 767.68,286.31 768.12,287.32 768.56,288.32 769.01,289.34 769.45,290.35 769.89,291.37 770.33,292.39 770.78,293.41 771.22,294.44 771.66,295.47 772.10,296.51 772.55,297.55 772.99,298.59 773.43,299.63 773.87,300.68 774.32,301.72 774.76,302.78 775.20,303.83 775.64,304.89 776.09,305.95 776.53,307.01 776.97,308.08 777.41,309.15 777.86,310.22 778.30,311.29 778.74,312.37 779.18,313.45 779.56,314.38 779.94,315.31 780.32,316.24 780.70,317.17 781.08,318.10 781.46,319.04 781.84,319.98 782.22,320.91 782.60,321.85 782.98,322.80 783.36,323.74 783.74,324.68 784.11,325.63 784.49,326.58 784.87,327.53 785.25,328.48 785.63,329.43 786.01,330.38 786.39,331.34 786.77,332.29 787.15,333.25 787.53,334.20 787.91,335.16 788.29,336.12 788.67,337.08 789.05,338.04 789.42,339.01 789.80,339.97 790.18,340.94 790.56,341.90 790.94,342.87 791.32,343.83 791.70,344.80 792.08,345.77 792.46,346.74 792.84,347.71 793.22,348.68 793.60,349.65 793.98,350.62 794.36,351.60 794.73,352.57 795.11,353.54 795.49,354.52 795.87,355.49 796.25,356.47 796.63,357.44 797.01,358.42 797.39,359.40 797.77,360.37 798.15,361.35 798.53,362.33 798.91,363.31 799.29,364.28 799.66,365.26 800.04,366.24 800.42,367.22 800.80,368.20 801.18,369.18 801.56,370.16 801.94,371.14 802.32,372.12 802.70,373.10 803.08,374.08 803.46,375.06 803.84,376.04 804.22,377.02 804.60,378.00 804.98,378.97 805.35,379.95 805.73,380.93 806.11,381.91 806.49,382.89 806.87,383.87 807.25,384.84 807.63,385.82 808.01,386.80 808.39,387.77 808.77,388.75 809.15,389.73 809.53,390.70 809.91,391.68 810.29,392.65 810.66,393.62 811.04,394.59 811.42,395.57 811.80,396.54 812.18,397.51 812.56,398.48 812.94,399.45 813.32,400.42 813.70,401.38 814.08,402.35 814.46,403.31 814.84,404.28 815.22,405.24 815.60,406.21 815.97,407.17 816.35,408.13 816.73,409.09 817.11,410.05 817.49,411.00 817.87,411.96 818.25,412.91 818.63,413.87 819.01,414.82 819.39,415.77 819.77,416.72 820.15,417.67 820.53,418.61 820.90,419.56 821.28,420.50 821.66,421.44 822.04,422.38 822.42,423.32 822.80,424.26 823.18,425.20 823.56,426.13 823.94,427.06 824.32,427.99 824.70,428.92 825.08,429.85 825.52,430.93 825.96,432.01 826.40,433.08 826.85,434.15 827.29,435.22 827.73,436.29 828.17,437.35 828.62,438.41 829.06,439.47 829.50,440.52 829.94,441.57 830.39,442.62 830.83,443.67 831.27,444.71 831.71,445.75 832.16,446.78 832.60,447.81 833.04,448.84 833.48,449.87 833.93,450.89 834.37,451.91 834.81,452.92 835.25,453.93 835.70,454.94 836.14,455.95 836.58,456.95 837.02,457.94 837.47,458.93 837.91,459.92 838.35,460.91 838.79,461.89 839.24,462.86 839.68,463.83 840.12,464.80 840.56,465.77 841.01,466.73 841.45,467.68 841.89,468.63 842.33,469.58 842.78,470.52 843.22,471.46 843.66,472.39 844.10,473.32 844.55,474.24 844.99,475.16 845.43,476.07 845.87,476.98 846.32,477.89 846.76,478.78 847.27,479.81 847.77,480.82 848.28,481.83 848.78,482.83 849.29,483.83 849.79,484.81 850.30,485.80 850.81,486.77 851.31,487.74 851.82,488.70 852.32,489.65 852.83,490.60 853.33,491.53 853.84,492.46 854.35,493.39 854.85,494.30 855.36,495.21 855.86,496.11 856.37,497.01 856.87,497.89 857.38,498.77 857.89,499.64 857.95,499.75 862.3,505.5" stroke="#0028ff"/>
<polyline points="331.50,119.53 332.51,119.53 333.52,119.53 334.53,119.53 335.55,119.53 336.56,119.53 337.57,119.53 338.58,119.53 339.59,119.53 340.60,119.53 341.61,119.53 342.63,119.53 343.64,119.53 344.65,119.53 345.66,119.53 346.67,119.54 347.68,119.54 348.69,119.54 349.71,119.54 350.72,119.54 351.73,119.54 352.74,119.54 353.75,119.54 354.76,119.54 355.77,119.54 356.79,119.54 357.80,119.54 358.81,119.55 359.82,119.55 360.83,119.55 361.84,119.55 362.85,119.55 363.87,119.55 364.88,119.55 365.89,119.55 366.90,119.55 367.91,119.55 368.92,119.56 369.93,119.56 370.95,119.56 371.96,119.56 372.97,119.56 373.98,119.56 374.99,119.56 376.00,119.56 377.01,119.57 378.03,119.57 379.04,119.57 380.05,119.57 381.06,119.57 382.07,119.57 383.08,119.58 384.09,119.58 385.11,119.58 386.12,119.58 387.13,119.58 388.14,119.58 389.15,119.59 390.16,119.59 391.17,119.59 392.19,119.59 393.20,119.59 394.21,119.59 395.22,119.60 396.23,119.60 397.24,119.60 398.25,119.60 399.27,119.60 400.28,119.61 401.29,119.61 402.30,119.61 403.31,119.61 404.32,119.62 405.33,119.62 406.35,119.62 407.36,119.62 408.37,119.63 409.38,119.63 410.39,119.63 411.40,119.63 412.41,119.64 413.43,119.64 414.44,119.64 415.45,119.65 416.46,119.65 417.47,119.65 418.48,119.65 419.49,119.66 420.51,119.66 421.52,119.66 422.53,119.67 423.54,119.67 424.55,119.67 425.56,119.68 426.57,119.68 427.59,119.69 428.60,119.69 429.61,119.69 430.62,119.70 431.63,119.70 432.64,119.71 433.65,119.71 434.67,119.71 435.68,119.72 436.69,119.72 437.70,119.73 438.71,119.73 439.72,119.74 440.73,119.74 441.75,119.75 442.76,119.75 443.77,119.76 444.78,119.76 445.79,119.77 446.80,119.77 447.81,119.78 448.83,119.78 449.84,119.79 450.85,119.80 451.86,119.80 452.87,119.81 453.88,119.81 454.89,119.82 455.91,119.83 456.92,119.83 457.93,119.84 458.94,119.85 459.95,119.85 460.96,119.86 461.97,119.87 462.99,119.88 464.00,119.88 465.01,119.89 466.02,119.90 467.03,119.91 468.04,119.92 469.05,119.92 470.07,119.93 471.08,119.94 472.09,119.95 473.10,119.96 474.11,119.97 475.12,119.98 476.13,119.99 477.15,120.00 478.16,120.01 479.17,120.02 480.18,120.03 481.19,120.04 482.20,120.05 483.21,120.06 484.23,120.07 485.24,120.08 486.25,120.10 487.26,120.11 488.27,120.12 489.28,120.13 490.29,120.15 491.31,120.16 492.32,120.17 493.33,120.19 494.34,120.20 495.35,120.21 496.36,120.23 497.37,120.24 498.39,120.26 499.40,120.27 500.41,120.29 501.42,120.30 502.43,120.32 503.44,120.34 504.45,120.35 505.47,120.37 506.48,120.39 507.49,120.40 508.50,120.42 509.51,120.44 510.52,120.46 511.53,120.48 512.55,120.50 513.56,120.52 514.57,120.54 515.58,120.56 516.59,120.58 517.60,120.60 518.61,120.62 519.63,120.65 520.64,120.67 521.65,120.69 522.66,120.71 523.67,120.74 524.68,120.76 525.69,120.79 526.71,120.81 527.72,120.84 528.73,120.87 529.74,120.89 530.75,120.92 531.76,120.95 532.77,120.98 533.79,121.01 534.80,121.04 535.81,121.07 536.82,121.10 537.83,121.13 538.84,121.16 539.85,121.19 540.87,121.23 541.88,121.26 542.89,121.30 543.90,121.33 544.91,121.37 545.92,121.40 546.93,121.44 547.95,121.48 548.96,121.52 549.97,121.56 550.98,121.60 551.99,121.64 553.00,121.68 554.01,121.72 555.03,121.77 556.04,121.81 557.05,121.86 558.06,121.90 559.07,121.95 560.08,122.00 561.09,122.05 562.11,122.10 563.12,122.15 564.13,122.20 565.14,122.25 566.15,122.30 567.16,122.36 568.17,122.41 569.19,122.47 570.20,122.53 571.21,122.59 572.22,122.65 573.23,122.71 574.24,122.77 575.25,122.83 576.27,122.90 577.28,122.96 578.29,123.03 579.30,123.10 580.31,123.17 581.32,123.24 582.33,123.31 583.35,123.39 584.36,123.46 585.37,123.54 586.38,123.62 587.39,123.69 588.40,123.78 589.41,123.86 590.43,123.94 591.44,124.03 592.45,124.12 593.46,124.20 594.47,124.29 595.48,124.39 596.49,124.48 597.51,124.58 598.52,124.67 599.53,124.77 600.54,124.87 601.55,124.98 602.56,125.08 603.57,125.19 604.59,125.30 605.60,125.41 606.61,125.52 607.62,125.64 608.63,125.76 609.64,125.88 610.65,126.00 611.67,126.12 612.68,126.25 613.69,126.38 614.70,126.51 615.71,126.64 616.72,126.78 617.73,126.92 618.75,127.06 619.76,127.20 620.77,127.35 621.78,127.50 622.79,127.65 623.80,127.80 624.81,127.96 625.83,128.12 626.84,128.29 627.85,128.45 628.86,128.62 629.87,128.80 630.88,128.97 631.89,129.15 632.91,129.33 633.92,129.52 634.93,129.71 635.94,129.90 636.95,130.10 637.96,130.30 638.97,130.50 639.99,130.71 641.00,130.92 642.01,131.14 643.02,131.36 644.03,131.58 645.04,131.81 646.05,132.04 647.07,132.28 648.08,132.52 649.09,132.76 650.10,133.01 651.11,133.26 652.12,133.52 653.13,133.79 654.15,134.05 655.16,134.33 656.17,134.61 657.18,134.89 658.19,135.18 659.20,135.47 660.21,135.77 661.23,136.07 662.24,136.38 663.25,136.70 664.26,137.02 665.27,137.35 666.28,137.68 667.23,138.00 668.18,138.32 669.13,138.65 670.08,138.99 671.02,139.33 671.97,139.67 672.92,140.02 673.87,140.38 674.82,140.75 675.77,141.12 676.71,141.49 677.66,141.88 678.61,142.26 679.56,142.66 680.51,143.06 681.45,143.47 682.40,143.89 683.35,144.31 684.30,144.74 685.25,145.18 686.20,145.63 687.14,146.08 688.09,146.54 689.04,147.01 689.99,147.49 690.94,147.97 691.88,148.46 692.77,148.93 693.65,149.40 694.54,149.89 695.42,150.38 696.31,150.87 697.19,151.38 698.08,151.89 698.96,152.41 699.85,152.94 700.73,153.48 701.62,154.03 702.50,154.58 703.39,155.14 704.27,155.72 705.16,156.30 706.04,156.89 706.93,157.49 707.81,158.10 708.64,158.67 709.46,159.25 710.28,159.84 711.10,160.44 711.92,161.05 712.75,161.67 713.57,162.29 714.39,162.93 715.21,163.57 716.03,164.23 716.85,164.89 717.68,165.56 718.50,166.24 719.32,166.94 720.14,167.64 720.90,168.29 721.66,168.96 722.42,169.63 723.18,170.32 723.93,171.01 724.69,171.71 725.45,172.42 726.21,173.14 726.97,173.87 727.73,174.61 728.49,175.36 729.24,176.12 730.00,176.89 730.76,177.67 731.46,178.40 732.15,179.13 732.85,179.87 733.54,180.62 734.24,181.38 734.93,182.15 735.63,182.93 736.32,183.72 737.02,184.51 737.72,185.32 738.41,186.14 739.11,186.96 739.80,187.80 740.50,188.65 741.13,189.42 741.76,190.21 742.39,191.00 743.02,191.81 743.66,192.62 744.29,193.44 744.92,194.27 745.55,195.10 746.19,195.95 746.82,196.80 747.45,197.66 748.08,198.53 748.71,199.41 749.35,200.30 749.98,201.19 750.61,202.10 751.24,203.01 751.81,203.84 752.38,204.68 752.95,205.52 753.52,206.37 754.09,207.23 754.66,208.09 755.23,208.96 755.79,209.84 756.36,210.73 756.93,211.62 757.50,212.52 758.07,213.42 758.64,214.33 759.21,215.25 759.78,216.18 760.35,217.11 760.91,218.05 761.48,219.00 762.05,219.96 762.62,220.92 763.19,221.88 763.70,222.75 764.20,223.62 764.71,224.50 765.21,225.38 765.72,226.26 766.22,227.16 766.73,228.05 767.24,228.95 767.74,229.86 768.25,230.77 768.75,231.69 769.26,232.61 769.76,233.54 770.27,234.47 770.78,235.41 771.28,236.35 771.79,237.30 772.29,238.25 772.80,239.20 773.30,240.16 773.81,241.13 774.32,242.10 774.82,243.07 775.33,244.05 775.83,245.03 776.34,246.02 776.84,247.01 777.35,248.00 777.86,249.00 778.36,250.00 778.87,251.01 779.37,252.02 779.88,253.03 780.38,254.05 780.89,255.08 781.33,255.97 781.78,256.87 782.22,257.78 782.66,258.69 783.10,259.60 783.55,260.51 783.99,261.43 784.43,262.35 784.87,263.27 785.32,264.20 785.76,265.13 786.20,266.06 786.64,267.00 787.09,267.94 787.53,268.89 787.97,269.84 788.41,270.79 788.86,271.74 789.30,272.70 789.74,273.67 790.18,274.64 790.63,275.61 791.07,276.58 791.51,277.56 791.95,278.55 792.40,279.54 792.84,280.53 793.28,281.53 793.72,282.53 794.17,283.54 794.61,284.55 795.05,285.56 795.49,286.58 795.94,287.61 796.38,288.64 796.82,289.67 797.26,290.71 797.71,291.76 798.15,292.81 798.59,293.87 799.03,294.93 799.48,295.99 799.92,297.06 800.36,298.14 800.74,299.07 801.12,300.00 801.50,300.94 801.88,301.88 802.26,302.83 802.64,303.78 803.02,304.73 803.39,305.69 803.77,306.65 804.15,307.62 804.53,308.60 804.91,309.58 805.29,310.56 805.67,311.55 806.05,312.54 806.43,313.54 806.81,314.54 807.19,315.55 807.57,316.57 807.95,317.59 808.33,318.61 808.70,319.64 809.08,320.67 809.46,321.71 809.84,322.76 810.22,323.81 810.60,324.86 810.98,325.92 811.36,326.99 811.74,328.06 812.12,329.13 812.50,330.22 812.88,331.30 813.26,332.39 813.64,333.49 814.01,334.59 814.39,335.69 814.77,336.80 815.15,337.92 815.53,339.04 815.91,340.17 816.29,341.30 816.67,342.43 816.99,343.38 817.30,344.34 817.62,345.29 817.93,346.25 818.25,347.22 818.57,348.19 818.88,349.16 819.20,350.13 819.51,351.11 819.83,352.09 820.15,353.08 820.46,354.06 820.78,355.06 821.09,356.05 821.41,357.05 821.73,358.05 822.04,359.06 822.36,360.06 822.67,361.08 822.99,362.09 823.31,363.11 823.62,364.13 823.94,365.16 824.26,366.19 824.57,367.22 824.89,368.25 825.20,369.29 825.52,370.33 825.84,371.38 826.15,372.43 826.47,373.48 826.78,374.54 827.10,375.59 827.42,376.66 827.73,377.72 828.05,378.79 828.36,379.86 828.68,380.94 829.00,382.01 829.31,383.09 829.63,384.18 829.94,385.27 830.26,386.36 830.58,387.45 830.89,388.55 831.21,389.65 831.52,390.75 831.84,391.86 832.16,392.97 832.47,394.08 832.79,395.20 833.11,396.31 833.42,397.44 833.74,398.56 834.05,399.69 834.37,400.82 834.69,401.95 835.00,403.09 835.32,404.23 835.63,405.37 835.95,406.52 836.27,407.67 836.58,408.82 836.90,409.97 837.21,411.13 837.53,412.29 837.85,413.45 838.16,414.62 838.48,415.79 838.79,416.96 839.11,418.13 839.43,419.31 839.74,420.49 840.06,421.67 840.38,422.85 840.69,424.04 841.01,425.23 841.32,426.42 841.64,427.61 841.96,428.81 842.27,430.01 842.59,431.21 842.90,432.42 843.22,433.63 843.54,434.83 843.79,435.80 844.04,436.77 844.29,437.75 844.55,438.72 844.80,439.70 845.05,440.67 845.31,441.65 845.56,442.63 845.81,443.61 846.06,444.59 846.32,445.58 846.57,446.56 846.82,447.55 847.08,448.54 847.33,449.52 847.58,450.51 847.83,451.51 848.09,452.50 848.34,453.49 848.59,454.48 848.85,455.48 849.10,456.47 849.35,457.47 849.60,458.46 849.86,459.46 850.11,460.45 850.36,461.45 850.62,462.45 850.87,463.45 851.12,464.44 851.37,465.44 851.63,466.44 851.88,467.44 852.13,468.44 852.39,469.43 852.64,470.43 852.89,471.43 853.14,472.43 853.40,473.42 853.65,474.42 853.90,475.41 854.16,476.41 854.41,477.40 854.66,478.40 854.91,479.39 855.17,480.38 855.42,481.37 855.67,482.36 855.93,483.35 856.18,484.33 856.43,485.32 856.68,486.30 856.94,487.28 857.19,488.26 857.44,489.24 857.70,490.22 857.95,491.19 862.3,506" stroke="#dd3cf2"/>
<polyline points="331.50,525.49 332.51,525.49 333.52,525.49 334.53,525.49 335.55,525.49 336.56,525.49 337.57,525.49 338.58,525.49 339.59,525.49 340.60,525.48 341.61,525.48 342.63,525.48 343.64,525.48 344.65,525.48 345.66,525.48 346.67,525.48 347.68,525.48 348.69,525.48 349.71,525.48 350.72,525.48 351.73,525.48 352.74,525.48 353.75,525.48 354.76,525.48 355.77,525.47 356.79,525.47 357.80,525.47 358.81,525.47 359.82,525.47 360.83,525.47 361.84,525.47 362.85,525.47 363.87,525.47 364.88,525.47 365.89,525.47 366.90,525.46 367.91,525.46 368.92,525.46 369.93,525.46 370.95,525.46 371.96,525.46 372.97,525.46 373.98,525.46 374.99,525.45 376.00,525.45 377.01,525.45 378.03,525.45 379.04,525.45 380.05,525.45 381.06,525.44 382.07,525.44 383.08,525.44 384.09,525.44 385.11,525.44 386.12,525.44 387.13,525.43 388.14,525.43 389.15,525.43 390.16,525.43 391.17,525.42 392.19,525.42 393.20,525.42 394.21,525.42 395.22,525.42 396.23,525.41 397.24,525.41 398.25,525.41 399.27,525.40 400.28,525.40 401.29,525.40 402.30,525.40 403.31,525.39 404.32,525.39 405.33,525.39 406.35,525.38 407.36,525.38 408.37,525.38 409.38,525.37 410.39,525.37 411.40,525.37 412.41,525.36 413.43,525.36 414.44,525.35 415.45,525.35 416.46,525.34 417.47,525.34 418.48,525.34 419.49,525.33 420.51,525.33 421.52,525.32 422.53,525.32 423.54,525.31 424.55,525.31 425.56,525.30 426.57,525.30 427.59,525.29 428.60,525.28 429.61,525.28 430.62,525.27 431.63,525.27 432.64,525.26 433.65,525.25 434.67,525.25 435.68,525.24 436.69,525.23 437.70,525.23 438.71,525.22 439.72,525.21 440.73,525.20 441.75,525.19 442.76,525.19 443.77,525.18 444.78,525.17 445.79,525.16 446.80,525.15 447.81,525.14 448.83,525.13 449.84,525.12 450.85,525.11 451.86,525.10 452.87,525.09 453.88,525.08 454.89,525.07 455.91,525.06 456.92,525.05 457.93,525.04 458.94,525.03 459.95,525.02 460.96,525.00 461.97,524.99 462.99,524.98 464.00,524.97 465.01,524.95 466.02,524.94 467.03,524.92 468.04,524.91 469.05,524.90 470.07,524.88 471.08,524.87 472.09,524.85 473.10,524.83 474.11,524.82 475.12,524.80 476.13,524.78 477.15,524.77 478.16,524.75 479.17,524.73 480.18,524.71 481.19,524.69 482.20,524.67 483.21,524.66 484.23,524.64 485.24,524.61 486.25,524.59 487.26,524.57 488.27,524.55 489.28,524.53 490.29,524.51 491.31,524.48 492.32,524.46 493.33,524.43 494.34,524.41 495.35,524.38 496.36,524.36 497.37,524.33 498.39,524.31 499.40,524.28 500.41,524.25 501.42,524.22 502.43,524.19 503.44,524.16 504.45,524.13 505.47,524.10 506.48,524.07 507.49,524.04 508.50,524.01 509.51,523.97 510.52,523.94 511.53,523.90 512.55,523.87 513.56,523.83 514.57,523.80 515.58,523.76 516.59,523.72 517.60,523.68 518.61,523.64 519.63,523.60 520.64,523.56 521.65,523.52 522.66,523.47 523.67,523.43 524.68,523.38 525.69,523.34 526.71,523.29 527.72,523.25 528.73,523.20 529.74,523.15 530.75,523.10 531.76,523.05 532.77,523.00 533.79,522.94 534.80,522.89 535.81,522.83 536.82,522.78 537.83,522.72 538.84,522.66 539.85,522.60 540.87,522.54 541.88,522.48 542.89,522.42 543.90,522.36 544.91,522.29 545.92,522.23 546.93,522.16 547.95,522.09 548.96,522.02 549.97,521.95 550.98,521.88 551.99,521.80 553.00,521.73 554.01,521.65 555.03,521.57 556.04,521.50 557.05,521.41 558.06,521.33 559.07,521.25 560.08,521.16 561.09,521.08 562.11,520.99 563.12,520.90 564.13,520.81 565.14,520.72 566.15,520.62 567.16,520.53 568.17,520.43 569.19,520.33 570.20,520.23 571.21,520.12 572.22,520.02 573.23,519.91 574.24,519.80 575.25,519.69 576.27,519.58 577.28,519.47 578.29,519.35 579.30,519.23 580.31,519.11 581.32,518.99 582.33,518.87 583.35,518.74 584.36,518.61 585.37,518.48 586.38,518.35 587.39,518.21 588.40,518.07 589.41,517.93 590.43,517.79 591.44,517.64 592.45,517.50 593.46,517.35 594.47,517.19 595.48,517.04 596.49,516.88 597.51,516.72 598.52,516.56 599.53,516.39 600.54,516.22 601.55,516.05 602.56,515.88 603.57,515.70 604.59,515.52 605.60,515.33 606.61,515.15 607.62,514.96 608.63,514.76 609.64,514.57 610.65,514.37 611.67,514.17 612.68,513.96 613.69,513.75 614.70,513.54 615.71,513.32 616.72,513.10 617.73,512.88 618.75,512.65 619.76,512.42 620.77,512.18 621.78,511.94 622.79,511.70 623.80,511.45 624.81,511.20 625.83,510.95 626.84,510.69 627.85,510.42 628.86,510.16 629.87,509.88 630.88,509.61 631.89,509.32 632.91,509.04 633.92,508.75 634.93,508.45 635.94,508.15 636.95,507.85 637.96,507.54 638.97,507.22 639.99,506.90 641.00,506.57 642.01,506.24 643.02,505.91 643.97,505.59 644.92,505.26 645.86,504.93 646.81,504.59 647.76,504.25 648.71,503.91 649.66,503.56 650.61,503.20 651.55,502.84 652.50,502.47 653.45,502.10 654.40,501.72 655.35,501.34 656.30,500.95 657.24,500.55 658.19,500.15 659.14,499.74 660.09,499.32 661.04,498.90 661.98,498.48 662.93,498.04 663.88,497.60 664.83,497.15 665.78,496.70 666.73,496.24 667.67,495.77 668.62,495.30 669.57,494.81 670.52,494.32 671.47,493.83 672.35,493.36 673.24,492.88 674.12,492.39 675.01,491.90 675.89,491.41 676.78,490.90 677.66,490.39 678.55,489.87 679.43,489.34 680.32,488.81 681.20,488.26 682.09,487.71 682.97,487.16 683.86,486.59 684.74,486.02 685.63,485.43 686.51,484.84 687.40,484.25 688.28,483.64 689.10,483.07 689.92,482.49 690.75,481.90 691.57,481.31 692.39,480.70 693.21,480.09 694.03,479.48 694.86,478.85 695.68,478.22 696.50,477.57 697.32,476.92 698.14,476.26 698.96,475.60 699.79,474.92 700.61,474.23 701.43,473.54 702.25,472.84 703.01,472.18 703.77,471.51 704.53,470.84 705.29,470.16 706.04,469.47 706.80,468.78 707.56,468.07 708.32,467.36 709.08,466.64 709.84,465.91 710.60,465.17 711.35,464.42 712.11,463.67 712.87,462.90 713.63,462.13 714.39,461.35 715.08,460.62 715.78,459.89 716.48,459.15 717.17,458.40 717.87,457.64 718.56,456.88 719.26,456.11 719.95,455.33 720.65,454.54 721.34,453.74 722.04,452.94 722.73,452.13 723.43,451.30 724.12,450.47 724.82,449.64 725.51,448.79 726.15,448.01 726.78,447.23 727.41,446.43 728.04,445.63 728.68,444.83 729.31,444.01 729.94,443.19 730.57,442.36 731.20,441.52 731.84,440.68 732.47,439.82 733.10,438.96 733.73,438.09 734.36,437.22 735.00,436.33 735.63,435.44 736.26,434.54 736.89,433.63 737.46,432.80 738.03,431.97 738.60,431.13 739.17,430.29 739.74,429.43 740.31,428.58 740.88,427.71 741.44,426.84 742.01,425.96 742.58,425.07 743.15,424.17 743.72,423.27 744.29,422.36 744.86,421.45 745.43,420.52 746.00,419.59 746.57,418.65 747.13,417.71 747.70,416.76 748.27,415.79 748.84,414.83 749.35,413.96 749.85,413.09 750.36,412.21 750.86,411.32 751.37,410.43 751.88,409.53 752.38,408.63 752.89,407.72 753.39,406.80 753.90,405.88 754.40,404.95 754.91,404.02 755.41,403.07 755.92,402.13 756.43,401.17 756.93,400.21 757.44,399.24 757.94,398.27 758.45,397.29 758.96,396.30 759.46,395.31 759.97,394.31 760.47,393.30 760.98,392.28 761.48,391.26 761.93,390.37 762.37,389.46 762.81,388.55 763.25,387.64 763.70,386.72 764.14,385.79 764.58,384.87 765.02,383.93 765.47,382.99 765.91,382.05 766.35,381.10 766.79,380.14 767.24,379.18 767.68,378.22 768.12,377.25 768.56,376.27 769.01,375.30 769.45,374.31 769.89,373.32 770.33,372.33 770.78,371.33 771.22,370.33 771.66,369.32 772.10,368.30 772.55,367.29 772.99,366.26 773.43,365.24 773.87,364.21 774.32,363.17 774.76,362.13 775.20,361.08 775.64,360.03 776.09,358.98 776.53,357.92 776.97,356.86 777.41,355.79 777.86,354.72 778.30,353.64 778.68,352.72 779.06,351.79 779.44,350.86 779.82,349.92 780.20,348.99 780.57,348.05 780.95,347.10 781.33,346.16 781.71,345.21 782.09,344.26 782.47,343.30 782.85,342.35 783.23,341.39 783.61,340.42 783.99,339.46 784.37,338.49 784.75,337.52 785.13,336.55 785.50,335.57 785.88,334.60 786.26,333.62 786.64,332.63 787.02,331.65 787.40,330.66 787.78,329.67 788.16,328.68 788.54,327.69 788.92,326.69 789.30,325.70 789.68,324.70 790.06,323.70 790.44,322.69 790.82,321.69 791.19,320.68 791.57,319.68 791.95,318.67 792.33,317.65 792.71,316.64 793.09,315.63 793.47,314.61 793.85,313.59 794.23,312.58 794.61,311.56 794.99,310.53 795.37,309.51 795.75,308.49 796.12,307.47 796.50,306.44 796.88,305.41 797.26,304.39 797.64,303.36 798.02,302.33 798.40,301.30 798.78,300.27 799.16,299.23 799.54,298.20 799.92,297.16 800.30,296.13 800.68,295.09 801.06,294.05 801.43,293.01 801.81,291.97 802.19,290.93 802.57,289.89 802.95,288.84 803.33,287.80 803.71,286.75 804.09,285.70 804.47,284.65 804.85,283.60 805.23,282.55 805.61,281.50 805.99,280.45 806.37,279.39 806.75,278.34 807.12,277.28 807.50,276.22 807.88,275.16 808.26,274.10 808.64,273.04 809.02,271.97 809.40,270.91 809.78,269.84 810.16,268.77 810.54,267.71 810.92,266.63 811.30,265.56 811.68,264.49 812.06,263.42 812.43,262.34 812.81,261.26 813.19,260.18 813.57,259.10 813.95,258.02 814.33,256.94 814.71,255.85 815.09,254.76 815.47,253.68 815.85,252.58 816.23,251.49 816.61,250.40 816.99,249.30 817.37,248.21 817.74,247.11 818.12,246.01 818.50,244.91 818.88,243.80 819.26,242.70 819.64,241.59 820.02,240.49 820.40,239.38 820.78,238.26 821.16,237.15 821.54,236.04 821.92,234.92 822.30,233.80 822.67,232.68 823.05,231.56 823.43,230.44 823.81,229.32 824.19,228.19 824.57,227.06 824.95,225.93 825.33,224.80 825.71,223.67 826.09,222.54 826.47,221.40 826.85,220.27 827.23,219.13 827.54,218.18 827.86,217.23 828.17,216.28 828.49,215.32 828.81,214.37 829.12,213.41 829.44,212.46 829.75,211.50 830.07,210.54 830.39,209.58 830.70,208.62 831.02,207.66 831.34,206.70 831.65,205.74 831.97,204.77 832.28,203.81 832.60,202.84 832.92,201.87 833.23,200.90 833.55,199.93 833.86,198.96 834.18,197.99 834.50,197.02 834.81,196.04 835.13,195.07 835.44,194.09 835.76,193.12 836.08,192.14 836.39,191.16 836.71,190.18 837.02,189.20 837.34,188.22 837.66,187.23 837.97,186.25 838.29,185.26 838.61,184.28 838.92,183.29 839.24,182.30 839.55,181.31 839.87,180.32 840.19,179.33 840.50,178.34 840.82,177.35 841.13,176.35 841.45,175.36 841.77,174.36 842.08,173.36 842.40,172.37 842.71,171.37 843.03,170.37 843.35,169.36 843.66,168.36 843.98,167.36 844.29,166.35 844.61,165.35 844.93,164.34 845.24,163.33 845.56,162.33 845.87,161.32 846.19,160.31 846.51,159.29 846.82,158.28 847.14,157.27 847.46,156.25 847.77,155.24 848.09,154.22 848.40,153.20 848.72,152.18 849.04,151.16 849.35,150.14 849.67,149.12 849.98,148.10 850.30,147.07 850.62,146.05 850.93,145.02 851.25,144.00 851.56,142.97 851.88,141.94 852.20,140.91 852.51,139.88 852.83,138.84 853.14,137.81 853.46,136.78 853.78,135.74 854.09,134.70 854.41,133.67 854.72,132.63 855.04,131.59 855.36,130.55 855.67,129.51 855.99,128.46 856.31,127.42 856.62,126.37 856.94,125.33 857.25,124.28 857.57,123.23 857.89,122.18 858.20,121.13 858.45,120.29 861.5,118.5" stroke="#6ef000"/>
<polyline points="331.50,525.48 332.51,525.48 333.52,525.48 334.53,525.48 335.55,525.48 336.56,525.48 337.57,525.48 338.58,525.48 339.59,525.48 340.60,525.48 341.61,525.48 342.63,525.48 343.64,525.48 344.65,525.48 345.66,525.48 346.67,525.48 347.68,525.47 348.69,525.47 349.71,525.47 350.72,525.47 351.73,525.47 352.74,525.47 353.75,525.47 354.76,525.47 355.77,525.47 356.79,525.47 357.80,525.47 358.81,525.47 359.82,525.47 360.83,525.47 361.84,525.46 362.85,525.46 363.87,525.46 364.88,525.46 365.89,525.46 366.90,525.46 367.91,525.46 368.92,525.46 369.93,525.46 370.95,525.46 371.96,525.45 372.97,525.45 373.98,525.45 374.99,525.45 376.00,525.45 377.01,525.45 378.03,525.45 379.04,525.45 380.05,525.44 381.06,525.44 382.07,525.44 383.08,525.44 384.09,525.44 385.11,525.44 386.12,525.44 387.13,525.43 388.14,525.43 389.15,525.43 390.16,525.43 391.17,525.43 392.19,525.43 393.20,525.42 394.21,525.42 395.22,525.42 396.23,525.42 397.24,525.42 398.25,525.41 399.27,525.41 400.28,525.41 401.29,525.41 402.30,525.41 403.31,525.40 404.32,525.40 405.33,525.40 406.35,525.40 407.36,525.39 408.37,525.39 409.38,525.39 410.39,525.39 411.40,525.38 412.41,525.38 413.43,525.38 414.44,525.37 415.45,525.37 416.46,525.37 417.47,525.37 418.48,525.36 419.49,525.36 420.51,525.36 421.52,525.35 422.53,525.35 423.54,525.34 424.55,525.34 425.56,525.34 426.57,525.33 427.59,525.33 428.60,525.33 429.61,525.32 430.62,525.32 431.63,525.31 432.64,525.31 433.65,525.30 434.67,525.30 435.68,525.29 436.69,525.29 437.70,525.28 438.71,525.28 439.72,525.27 440.73,525.27 441.75,525.26 442.76,525.26 443.77,525.25 444.78,525.25 445.79,525.24 446.80,525.24 447.81,525.23 448.83,525.22 449.84,525.22 450.85,525.21 451.86,525.20 452.87,525.20 453.88,525.19 454.89,525.18 455.91,525.17 456.92,525.17 457.93,525.16 458.94,525.15 459.95,525.14 460.96,525.14 461.97,525.13 462.99,525.12 464.00,525.11 465.01,525.10 466.02,525.09 467.03,525.08 468.04,525.07 469.05,525.06 470.07,525.05 471.08,525.04 472.09,525.03 473.10,525.02 474.11,525.01 475.12,525.00 476.13,524.99 477.15,524.98 478.16,524.97 479.17,524.95 480.18,524.94 481.19,524.93 482.20,524.92 483.21,524.90 484.23,524.89 485.24,524.88 486.25,524.86 487.26,524.85 488.27,524.83 489.28,524.82 490.29,524.80 491.31,524.79 492.32,524.77 493.33,524.76 494.34,524.74 495.35,524.72 496.36,524.71 497.37,524.69 498.39,524.67 499.40,524.65 500.41,524.63 501.42,524.61 502.43,524.59 503.44,524.57 504.45,524.55 505.47,524.53 506.48,524.51 507.49,524.49 508.50,524.47 509.51,524.45 510.52,524.42 511.53,524.40 512.55,524.37 513.56,524.35 514.57,524.33 515.58,524.30 516.59,524.27 517.60,524.25 518.61,524.22 519.63,524.19 520.64,524.16 521.65,524.14 522.66,524.11 523.67,524.08 524.68,524.05 525.69,524.01 526.71,523.98 527.72,523.95 528.73,523.92 529.74,523.88 530.75,523.85 531.76,523.81 532.77,523.78 533.79,523.74 534.80,523.70 535.81,523.66 536.82,523.62 537.83,523.59 538.84,523.54 539.85,523.50 540.87,523.46 541.88,523.42 542.89,523.37 543.90,523.33 544.91,523.28 545.92,523.24 546.93,523.19 547.95,523.14 548.96,523.09 549.97,523.04 550.98,522.99 551.99,522.94 553.00,522.88 554.01,522.83 555.03,522.77 556.04,522.72 557.05,522.66 558.06,522.60 559.07,522.54 560.08,522.48 561.09,522.41 562.11,522.35 563.12,522.29 564.13,522.22 565.14,522.15 566.15,522.08 567.16,522.01 568.17,521.94 569.19,521.87 570.20,521.79 571.21,521.72 572.22,521.64 573.23,521.56 574.24,521.48 575.25,521.40 576.27,521.32 577.28,521.23 578.29,521.14 579.30,521.06 580.31,520.96 581.32,520.87 582.33,520.78 583.35,520.68 584.36,520.59 585.37,520.49 586.38,520.39 587.39,520.28 588.40,520.18 589.41,520.07 590.43,519.96 591.44,519.85 592.45,519.74 593.46,519.63 594.47,519.51 595.48,519.39 596.49,519.27 597.51,519.14 598.52,519.02 599.53,518.89 600.54,518.76 601.55,518.62 602.56,518.49 603.57,518.35 604.59,518.21 605.60,518.07 606.61,517.92 607.62,517.77 608.63,517.62 609.64,517.46 610.65,517.31 611.67,517.15 612.68,516.98 613.69,516.82 614.70,516.65 615.71,516.48 616.72,516.30 617.73,516.12 618.75,515.94 619.76,515.76 620.77,515.57 621.78,515.38 622.79,515.18 623.80,514.98 624.81,514.78 625.83,514.57 626.84,514.36 627.85,514.15 628.86,513.93 629.87,513.71 630.88,513.49 631.89,513.26 632.91,513.02 633.92,512.78 634.93,512.54 635.94,512.30 636.95,512.05 637.96,511.79 638.97,511.53 639.99,511.27 641.00,511.00 642.01,510.73 643.02,510.45 644.03,510.17 645.04,509.88 646.05,509.59 647.07,509.29 648.08,508.98 649.09,508.68 650.10,508.36 651.11,508.04 652.12,507.72 653.13,507.39 654.15,507.05 655.09,506.73 656.04,506.40 656.99,506.07 657.94,505.74 658.89,505.40 659.84,505.05 660.78,504.70 661.73,504.34 662.68,503.97 663.63,503.60 664.58,503.23 665.52,502.85 666.47,502.46 667.42,502.06 668.37,501.66 669.32,501.26 670.27,500.84 671.21,500.42 672.16,500.00 673.11,499.56 674.06,499.13 675.01,498.68 675.95,498.22 676.90,497.76 677.85,497.30 678.80,496.82 679.75,496.34 680.70,495.85 681.64,495.35 682.53,494.88 683.41,494.40 684.30,493.92 685.18,493.42 686.07,492.92 686.95,492.42 687.84,491.90 688.72,491.38 689.61,490.85 690.49,490.32 691.38,489.77 692.26,489.22 693.15,488.66 694.03,488.10 694.92,487.52 695.80,486.94 696.69,486.34 697.57,485.74 698.46,485.14 699.28,484.56 700.10,483.98 700.92,483.39 701.75,482.80 702.57,482.20 703.39,481.58 704.21,480.97 705.03,480.34 705.86,479.70 706.68,479.06 707.50,478.41 708.32,477.75 709.14,477.08 709.96,476.40 710.79,475.72 711.61,475.02 712.43,474.32 713.19,473.66 713.95,472.99 714.71,472.32 715.46,471.64 716.22,470.95 716.98,470.25 717.74,469.55 718.50,468.84 719.26,468.11 720.02,467.38 720.77,466.65 721.53,465.90 722.29,465.14 723.05,464.38 723.81,463.60 724.57,462.82 725.26,462.10 725.96,461.36 726.65,460.62 727.35,459.87 728.04,459.12 728.74,458.35 729.43,457.58 730.13,456.80 730.82,456.01 731.52,455.21 732.22,454.41 732.91,453.60 733.61,452.77 734.30,451.94 735.00,451.10 735.69,450.26 736.32,449.48 736.96,448.69 737.59,447.90 738.22,447.10 738.85,446.29 739.49,445.47 740.12,444.65 740.75,443.82 741.38,442.98 742.01,442.13 742.65,441.28 743.28,440.41 743.91,439.54 744.54,438.66 745.17,437.78 745.81,436.88 746.44,435.98 747.07,435.07 747.64,434.24 748.21,433.40 748.78,432.56 749.35,431.71 749.92,430.86 750.48,429.99 751.05,429.12 751.62,428.25 752.19,427.36 752.76,426.47 753.33,425.57 753.90,424.66 754.47,423.75 755.04,422.83 755.60,421.90 756.17,420.96 756.74,420.02 757.31,419.07 757.88,418.11 758.45,417.14 758.96,416.27 759.46,415.40 759.97,414.52 760.47,413.64 760.98,412.74 761.48,411.84 761.99,410.94 762.50,410.03 763.00,409.11 763.51,408.19 764.01,407.25 764.52,406.32 765.02,405.37 765.53,404.42 766.04,403.46 766.54,402.50 767.05,401.53 767.55,400.55 768.06,399.56 768.56,398.57 769.07,397.57 769.58,396.56 770.08,395.55 770.59,394.53 771.03,393.63 771.47,392.72 771.91,391.81 772.36,390.90 772.80,389.97 773.24,389.05 773.68,388.11 774.13,387.17 774.57,386.23 775.01,385.28 775.45,384.33 775.90,383.36 776.34,382.40 776.78,381.43 777.22,380.45 777.67,379.47 778.11,378.48 778.55,377.48 778.99,376.48 779.44,375.48 779.88,374.47 780.32,373.45 780.76,372.43 781.21,371.41 781.65,370.38 782.09,369.34 782.53,368.30 782.98,367.25 783.42,366.20 783.86,365.14 784.30,364.08 784.75,363.01 785.19,361.94 785.63,360.86 786.01,359.94 786.39,359.00 786.77,358.07 787.15,357.13 787.53,356.19 787.91,355.24 788.29,354.30 788.67,353.34 789.05,352.39 789.42,351.43 789.80,350.47 790.18,349.50 790.56,348.53 790.94,347.56 791.32,346.59 791.70,345.61 792.08,344.63 792.46,343.64 792.84,342.65 793.22,341.66 793.60,340.67 793.98,339.67 794.36,338.67 794.73,337.67 795.11,336.66 795.49,335.66 795.87,334.65 796.25,333.63 796.63,332.62 797.01,331.60 797.39,330.58 797.77,329.55 798.15,328.53 798.53,327.50 798.91,326.47 799.29,325.43 799.66,324.40 800.04,323.36 800.42,322.32 800.80,321.28 801.18,320.24 801.56,319.19 801.94,318.14 802.32,317.09 802.70,316.04 803.08,314.99 803.46,313.94 803.84,312.88 804.22,311.82 804.60,310.76 804.98,309.70 805.35,308.64 805.73,307.58 806.11,306.51 806.49,305.45 806.87,304.38 807.25,303.31 807.63,302.24 808.01,301.16 808.39,300.08 808.77,299.00 809.15,297.92 809.53,296.84 809.91,295.75 810.29,294.66 810.66,293.57 811.04,292.47 811.42,291.37 811.80,290.27 812.18,289.16 812.56,288.05 812.94,286.93 813.32,285.82 813.70,284.69 814.08,283.57 814.46,282.44 814.84,281.30 815.15,280.35 815.47,279.40 815.78,278.44 816.10,277.48 816.42,276.52 816.73,275.55 817.05,274.58 817.37,273.60 817.68,272.62 818.00,271.64 818.31,270.65 818.63,269.66 818.95,268.66 819.26,267.66 819.58,266.65 819.89,265.64 820.21,264.63 820.53,263.61 820.84,262.58 821.16,261.55 821.47,260.51 821.79,259.47 822.11,258.43 822.42,257.37 822.74,256.31 823.05,255.25 823.37,254.18 823.69,253.10 824.00,252.02 824.32,250.93 824.63,249.83 824.95,248.73 825.27,247.62 825.58,246.51 825.90,245.39 826.22,244.26 826.53,243.13 826.85,241.99 827.16,240.85 827.48,239.70 827.80,238.55 828.11,237.39 828.43,236.22 828.74,235.05 829.06,233.88 829.38,232.70 829.69,231.52 830.01,230.33 830.32,229.14 830.64,227.94 830.96,226.74 831.27,225.53 831.59,224.33 831.84,223.36 832.09,222.38 832.35,221.41 832.60,220.43 832.85,219.45 833.11,218.47 833.36,217.49 833.61,216.50 833.86,215.52 834.12,214.53 834.37,213.54 834.62,212.55 834.88,211.55 835.13,210.56 835.38,209.56 835.63,208.57 835.89,207.57 836.14,206.57 836.39,205.57 836.65,204.57 836.90,203.56 837.15,202.56 837.40,201.56 837.66,200.55 837.91,199.55 838.16,198.54 838.42,197.54 838.67,196.53 838.92,195.52 839.17,194.52 839.43,193.51 839.68,192.51 839.93,191.50 840.19,190.49 840.44,189.49 840.69,188.49 840.94,187.48 841.20,186.48 841.45,185.48 841.70,184.48 841.96,183.48 842.21,182.48 842.46,181.48 842.71,180.49 842.97,179.49 843.22,178.50 843.47,177.51 843.73,176.52 843.98,175.54 844.23,174.55 844.48,173.57 844.74,172.59 844.99,171.61 845.24,170.64 845.50,169.66 845.75,168.69 846.00,167.73 846.32,166.52 846.63,165.32 846.95,164.12 847.27,162.92 847.58,161.73 847.90,160.54 848.21,159.36 848.53,158.18 848.85,157.00 849.16,155.83 849.48,154.66 849.79,153.49 850.11,152.33 850.43,151.18 850.74,150.02 851.06,148.87 851.37,147.73 851.69,146.58 852.01,145.45 852.32,144.31 852.64,143.18 852.95,142.06 853.27,140.93 853.59,139.81 853.90,138.70 854.22,137.59 854.54,136.48 854.85,135.38 855.17,134.28 855.48,133.18 855.80,132.09 856.12,131.00 856.43,129.92 856.75,128.84 857.06,127.76 857.38,126.69 857.70,125.62 858.01,124.55 858.33,123.49 858.64,122.43 858.96,121.38 859.28,120.33 861.5,118.5" stroke="#e02a2a"/>
<polyline points="331.50,525.49 332.51,525.49 333.52,525.49 334.53,525.49 335.55,525.49 336.56,525.49 337.57,525.49 338.58,525.49 339.59,525.49 340.60,525.49 341.61,525.49 342.63,525.49 343.64,525.49 344.65,525.49 345.66,525.49 346.67,525.49 347.68,525.49 348.69,525.49 349.71,525.49 350.72,525.48 351.73,525.48 352.74,525.48 353.75,525.48 354.76,525.48 355.77,525.48 356.79,525.48 357.80,525.48 358.81,525.48 359.82,525.48 360.83,525.48 361.84,525.48 362.85,525.48 363.87,525.48 364.88,525.48 365.89,525.48 366.90,525.48 367.91,525.48 368.92,525.48 369.93,525.48 370.95,525.47 371.96,525.47 372.97,525.47 373.98,525.47 374.99,525.47 376.00,525.47 377.01,525.47 378.03,525.47 379.04,525.47 380.05,525.47 381.06,525.47 382.07,525.47 383.08,525.47 384.09,525.46 385.11,525.46 386.12,525.46 387.13,525.46 388.14,525.46 389.15,525.46 390.16,525.46 391.17,525.46 392.19,525.46 393.20,525.46 394.21,525.45 395.22,525.45 396.23,525.45 397.24,525.45 398.25,525.45 399.27,525.45 400.28,525.45 401.29,525.45 402.30,525.44 403.31,525.44 404.32,525.44 405.33,525.44 406.35,525.44 407.36,525.44 408.37,525.43 409.38,525.43 410.39,525.43 411.40,525.43 412.41,525.43 413.43,525.43 414.44,525.42 415.45,525.42 416.46,525.42 417.47,525.42 418.48,525.42 419.49,525.41 420.51,525.41 421.52,525.41 422.53,525.41 423.54,525.41 424.55,525.40 425.56,525.40 426.57,525.40 427.59,525.40 428.60,525.39 429.61,525.39 430.62,525.39 431.63,525.39 432.64,525.38 433.65,525.38 434.67,525.38 435.68,525.37 436.69,525.37 437.70,525.37 438.71,525.37 439.72,525.36 440.73,525.36 441.75,525.36 442.76,525.35 443.77,525.35 444.78,525.34 445.79,525.34 446.80,525.34 447.81,525.33 448.83,525.33 449.84,525.33 450.85,525.32 451.86,525.32 452.87,525.31 453.88,525.31 454.89,525.30 455.91,525.30 456.92,525.29 457.93,525.29 458.94,525.28 459.95,525.28 460.96,525.27 461.97,525.27 462.99,525.26 464.00,525.26 465.01,525.25 466.02,525.25 467.03,525.24 468.04,525.23 469.05,525.23 470.07,525.22 471.08,525.22 472.09,525.21 473.10,525.20 474.11,525.20 475.12,525.19 476.13,525.18 477.15,525.17 478.16,525.17 479.17,525.16 480.18,525.15 481.19,525.14 482.20,525.14 483.21,525.13 484.23,525.12 485.24,525.11 486.25,525.10 487.26,525.09 488.27,525.08 489.28,525.07 490.29,525.06 491.31,525.05 492.32,525.04 493.33,525.03 494.34,525.02 495.35,525.01 496.36,525.00 497.37,524.99 498.39,524.98 499.40,524.97 500.41,524.95 501.42,524.94 502.43,524.93 503.44,524.92 504.45,524.90 505.47,524.89 506.48,524.88 507.49,524.86 508.50,524.85 509.51,524.83 510.52,524.82 511.53,524.80 512.55,524.79 513.56,524.77 514.57,524.76 515.58,524.74 516.59,524.72 517.60,524.71 518.61,524.69 519.63,524.67 520.64,524.65 521.65,524.63 522.66,524.61 523.67,524.59 524.68,524.57 525.69,524.55 526.71,524.53 527.72,524.51 528.73,524.49 529.74,524.47 530.75,524.45 531.76,524.42 532.77,524.40 533.79,524.38 534.80,524.35 535.81,524.33 536.82,524.30 537.83,524.28 538.84,524.25 539.85,524.22 540.87,524.20 541.88,524.17 542.89,524.14 543.90,524.11 544.91,524.08 545.92,524.05 546.93,524.02 547.95,523.99 548.96,523.95 549.97,523.92 550.98,523.89 551.99,523.85 553.00,523.82 554.01,523.78 555.03,523.75 556.04,523.71 557.05,523.67 558.06,523.63 559.07,523.59 560.08,523.55 561.09,523.51 562.11,523.47 563.12,523.43 564.13,523.38 565.14,523.34 566.15,523.29 567.16,523.25 568.17,523.20 569.19,523.15 570.20,523.10 571.21,523.05 572.22,523.00 573.23,522.95 574.24,522.90 575.25,522.84 576.27,522.79 577.28,522.73 578.29,522.67 579.30,522.62 580.31,522.56 581.32,522.50 582.33,522.43 583.35,522.37 584.36,522.31 585.37,522.24 586.38,522.17 587.39,522.10 588.40,522.03 589.41,521.96 590.43,521.89 591.44,521.82 592.45,521.74 593.46,521.67 594.47,521.59 595.48,521.51 596.49,521.43 597.51,521.34 598.52,521.26 599.53,521.17 600.54,521.09 601.55,521.00 602.56,520.90 603.57,520.81 604.59,520.72 605.60,520.62 606.61,520.52 607.62,520.42 608.63,520.32 609.64,520.22 610.65,520.11 611.67,520.00 612.68,519.89 613.69,519.78 614.70,519.66 615.71,519.55 616.72,519.43 617.73,519.31 618.75,519.18 619.76,519.06 620.77,518.93 621.78,518.80 622.79,518.67 623.80,518.53 624.81,518.39 625.83,518.25 626.84,518.11 627.85,517.96 628.86,517.81 629.87,517.66 630.88,517.51 631.89,517.35 632.91,517.19 633.92,517.03 634.93,516.86 635.94,516.69 636.95,516.52 637.96,516.34 638.97,516.16 639.99,515.98 641.00,515.80 642.01,515.61 643.02,515.41 644.03,515.22 645.04,515.02 646.05,514.81 647.07,514.61 648.08,514.39 649.09,514.18 650.10,513.96 651.11,513.74 652.12,513.51 653.13,513.28 654.15,513.04 655.16,512.80 656.17,512.56 657.18,512.31 658.19,512.05 659.20,511.80 660.21,511.53 661.23,511.26 662.24,510.99 663.25,510.71 664.26,510.43 665.27,510.14 666.28,509.85 667.29,509.55 668.31,509.25 669.32,508.94 670.33,508.62 671.34,508.30 672.35,507.97 673.36,507.64 674.37,507.30 675.32,506.98 676.27,506.65 677.22,506.32 678.17,505.98 679.12,505.63 680.06,505.28 681.01,504.92 681.96,504.56 682.91,504.19 683.86,503.81 684.80,503.43 685.75,503.04 686.70,502.65 687.65,502.25 688.60,501.84 689.55,501.42 690.49,501.00 691.44,500.57 692.39,500.13 693.34,499.69 694.29,499.24 695.23,498.78 696.18,498.31 697.13,497.84 698.08,497.36 699.03,496.87 699.98,496.37 700.86,495.89 701.75,495.41 702.63,494.93 703.52,494.43 704.40,493.93 705.29,493.42 706.17,492.90 707.06,492.37 707.94,491.84 708.83,491.30 709.71,490.74 710.60,490.18 711.48,489.62 712.37,489.04 713.25,488.45 714.14,487.86 715.02,487.25 715.91,486.64 716.73,486.06 717.55,485.47 718.37,484.88 719.19,484.28 720.02,483.66 720.84,483.04 721.66,482.41 722.48,481.78 723.30,481.13 724.12,480.47 724.95,479.81 725.77,479.13 726.59,478.45 727.41,477.75 728.23,477.05 728.99,476.39 729.75,475.72 730.51,475.04 731.27,474.36 732.03,473.66 732.78,472.96 733.54,472.25 734.30,471.53 735.06,470.80 735.82,470.06 736.58,469.31 737.34,468.55 738.09,467.78 738.85,467.00 739.55,466.27 740.24,465.54 740.94,464.80 741.63,464.05 742.33,463.29 743.02,462.52 743.72,461.75 744.42,460.96 745.11,460.17 745.81,459.36 746.50,458.55 747.20,457.72 747.89,456.89 748.59,456.05 749.22,455.27 749.85,454.49 750.48,453.69 751.12,452.89 751.75,452.08 752.38,451.27 753.01,450.44 753.64,449.60 754.28,448.76 754.91,447.91 755.54,447.04 756.17,446.17 756.81,445.29 757.44,444.40 758.07,443.50 758.70,442.59 759.27,441.76 759.84,440.93 760.41,440.09 760.98,439.23 761.55,438.38 762.12,437.51 762.68,436.63 763.25,435.75 763.82,434.86 764.39,433.96 764.96,433.05 765.53,432.13 766.10,431.21 766.67,430.27 767.24,429.33 767.81,428.38 768.37,427.42 768.94,426.45 769.45,425.58 769.95,424.71 770.46,423.83 770.97,422.94 771.47,422.04 771.98,421.14 772.48,420.23 772.99,419.31 773.49,418.39 774.00,417.46 774.51,416.52 775.01,415.57 775.52,414.62 776.02,413.66 776.53,412.69 777.03,411.71 777.54,410.73 778.05,409.74 778.55,408.74 779.06,407.73 779.56,406.72 780.07,405.70 780.51,404.80 780.95,403.90 781.40,402.98 781.84,402.07 782.28,401.15 782.72,400.22 783.17,399.28 783.61,398.34 784.05,397.40 784.49,396.44 784.94,395.48 785.38,394.52 785.82,393.55 786.26,392.57 786.71,391.59 787.15,390.60 787.59,389.61 788.03,388.61 788.48,387.60 788.92,386.59 789.36,385.57 789.80,384.55 790.25,383.52 790.69,382.48 791.13,381.44 791.57,380.39 792.02,379.33 792.46,378.27 792.90,377.20 793.34,376.13 793.72,375.20 794.10,374.27 794.48,373.34 794.86,372.40 795.24,371.46 795.62,370.51 796.00,369.56 796.38,368.60 796.76,367.64 797.14,366.67 797.52,365.70 797.89,364.72 798.27,363.74 798.65,362.76 799.03,361.77 799.41,360.78 799.79,359.78 800.17,358.78 800.55,357.77 800.93,356.76 801.31,355.74 801.69,354.72 802.07,353.70 802.45,352.67 802.83,351.63 803.21,350.60 803.58,349.55 803.96,348.51 804.34,347.45 804.72,346.40 805.10,345.34 805.48,344.27 805.86,343.20 806.24,342.13 806.62,341.05 807.00,339.97 807.38,338.88 807.76,337.79 808.14,336.70 808.52,335.60 808.89,334.50 809.27,333.39 809.65,332.28 810.03,331.16 810.41,330.05 810.79,328.92 811.17,327.79 811.55,326.66 811.93,325.53 812.24,324.58 812.56,323.63 812.88,322.67 813.19,321.71 813.51,320.75 813.83,319.79 814.14,318.83 814.46,317.86 814.77,316.89 815.09,315.92 815.41,314.94 815.72,313.96 816.04,312.98 816.35,312.00 816.67,311.01 816.99,310.03 817.30,309.04 817.62,308.04 817.93,307.05 818.25,306.05 818.57,305.05 818.88,304.05 819.20,303.04 819.51,302.04 819.83,301.03 820.15,300.02 820.46,299.01 820.78,297.99 821.09,296.97 821.41,295.95 821.73,294.93 822.04,293.91 822.36,292.88 822.67,291.85 822.99,290.82 823.31,289.79 823.62,288.76 823.94,287.72 824.26,286.69 824.57,285.65 824.89,284.61 825.20,283.57 825.52,282.52 825.84,281.47 826.15,280.42 826.47,279.36 826.78,278.29 827.10,277.22 827.42,276.14 827.73,275.06 828.05,273.96 828.36,272.86 828.68,271.74 829.00,270.62 829.31,269.48 829.63,268.33 829.94,267.16 830.26,265.98 830.58,264.78 830.83,263.81 831.08,262.83 831.34,261.84 831.59,260.84 831.84,259.82 832.09,258.79 832.35,257.75 832.60,256.69 832.85,255.62 833.11,254.53 833.36,253.43 833.61,252.31 833.86,251.17 834.12,250.01 834.37,248.84 834.62,247.65 834.88,246.45 835.13,245.23 835.38,243.99 835.63,242.74 835.89,241.47 836.14,240.20 836.39,238.91 836.65,237.61 836.84,236.62 837.02,235.64 837.21,234.64 837.40,233.64 837.59,232.64 837.78,231.63 837.97,230.62 838.16,229.60 838.35,228.58 838.54,227.56 838.73,226.53 838.92,225.51 839.11,224.48 839.30,223.45 839.49,222.41 839.68,221.38 839.87,220.35 840.06,219.31 840.25,218.28 840.44,217.25 840.63,216.22 840.82,215.19 841.01,214.16 841.20,213.14 841.39,212.12 841.58,211.10 841.77,210.08 841.96,209.07 842.14,208.07 842.33,207.07 842.52,206.07 842.71,205.08 842.90,204.10 843.16,202.80 843.41,201.52 843.66,200.25 843.92,198.99 844.17,197.74 844.42,196.51 844.67,195.29 844.93,194.07 845.18,192.87 845.43,191.69 845.69,190.51 845.94,189.34 846.19,188.18 846.44,187.03 846.70,185.89 846.95,184.76 847.20,183.64 847.46,182.52 847.71,181.41 847.96,180.31 848.21,179.22 848.47,178.13 848.72,177.05 848.97,175.97 849.23,174.90 849.48,173.83 849.73,172.77 849.98,171.71 850.24,170.65 850.49,169.60 850.74,168.54 851.00,167.49 851.25,166.44 851.50,165.39 851.75,164.34 852.01,163.29 852.26,162.24 852.51,161.18 852.76,160.13 853.02,159.07 853.27,158.01 853.52,156.94 853.78,155.87 854.03,154.80 854.28,153.72 854.54,152.63 854.79,151.54 855.04,150.44 855.29,149.33 855.55,148.21 855.80,147.09 856.05,145.95 856.31,144.80 856.56,143.65 856.81,142.48 857.06,141.30 857.32,140.10 857.57,138.89 857.82,137.67 858.08,136.43 858.33,135.18 858.58,133.91 858.83,132.62 859.09,131.32 859.28,130.33 859.47,129.33 859.66,128.31 859.85,127.29 860.03,126.25 860.22,125.20 860.41,124.14 860.60,123.07 860.79,121.98 860.98,120.88 861.11,120.14 861.5,118.5" stroke="#0028ff"/>
</g>
<rect x="331.5" y="100.5" width="531" height="425" fill="none" stroke="#707070" stroke-width="1"/>
<rect x="294.5" y="548.5" width="312" height="23" fill="#fff" stroke="#151515" stroke-width="1"/>
<rect x="299" y="556" width="9" height="9" fill="#0028ff"/>
<text x="312" y="565" fill="#111" class="lg">Diagnosed</text>
<rect x="386" y="556" width="9" height="9" fill="#e02a2a"/>
<text x="398.5" y="565" fill="#111" class="lg">I</text>
<rect x="409" y="556" width="9" height="9" fill="#6ef000"/>
<text x="422" y="565" fill="#111" class="lg">Preinfectious</text>
<rect x="509.5" y="556" width="9" height="9" fill="#66f2f8"/>
<text x="522" y="565" fill="#111" class="lg">R</text>
<rect x="538" y="556" width="9" height="9" fill="#dd3cf2"/>
<text x="550" y="565" fill="#111" class="lg">S2</text>
<rect x="574" y="556" width="9" height="9" fill="#0028ff"/>
<text x="585.5" y="565" fill="#111" class="lg">S1</text>
</svg>
</body></html>
